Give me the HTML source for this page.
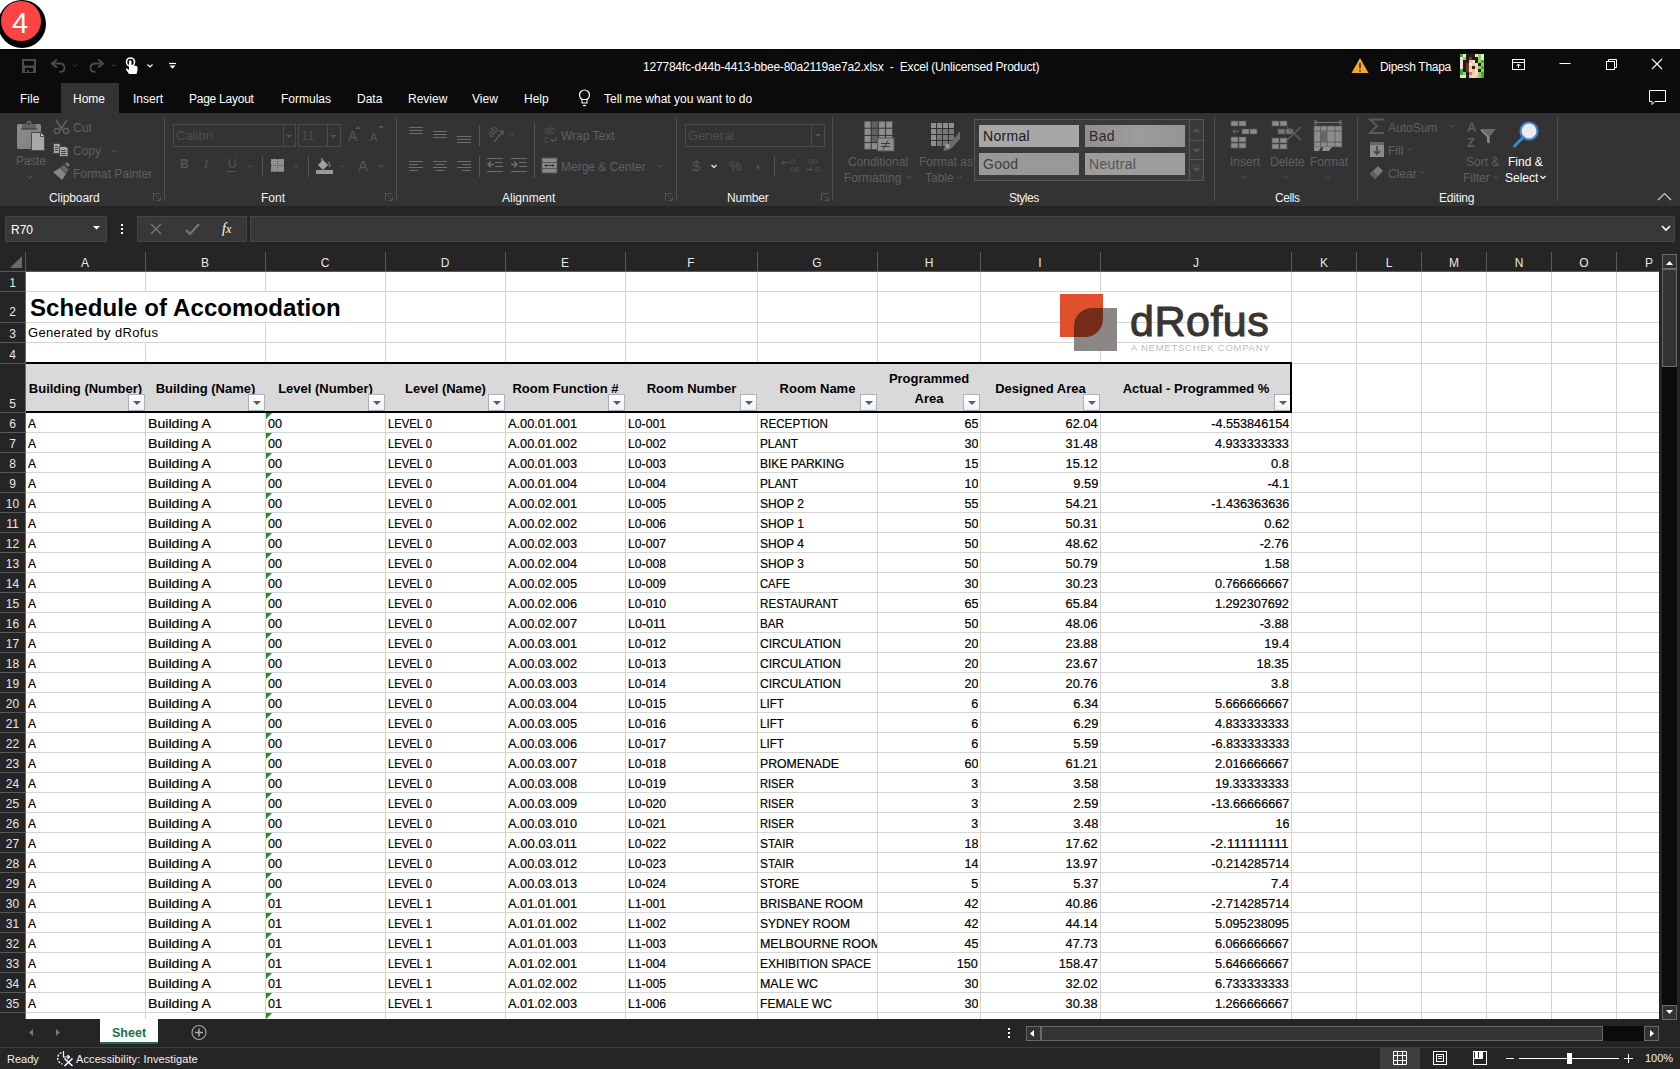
<!DOCTYPE html><html><head><meta charset="utf-8"><style>
*{box-sizing:border-box;margin:0;padding:0}
html,body{width:1680px;height:1069px;overflow:hidden;background:#fff;font-family:"Liberation Sans",sans-serif}
.a{position:absolute}
.t{position:absolute;white-space:pre;line-height:1}
.dis{color:#6f6f6f}
.lbl{position:absolute;white-space:pre;color:#f2f2f2;font-size:12px;line-height:1}
.sep{position:absolute;width:1px;background:#4f4f4f}
.cell{position:absolute;white-space:pre;font-size:13px;line-height:20px;color:#000;height:20px;overflow:hidden;-webkit-text-stroke:0.2px #000}
.r{text-align:right}
.fb{position:absolute;width:17px;height:17px;border:1px solid #a9b1ba;background:linear-gradient(#ffffff,#eef1f5)}
.fb:after{content:"";position:absolute;left:4px;top:6px;border-left:4px solid transparent;border-right:4px solid transparent;border-top:4px solid #5d5d5d}
.gt{position:absolute;width:0;height:0;border-top:6px solid #1e8c1e;border-right:6px solid transparent}

</style></head><body>
<div class="a" style="left:-2px;top:0;width:48px;height:48px;border-radius:50%;background:#000"></div>
<div class="a" style="left:1px;top:1px;width:40px;height:40px;border-radius:50%;background:#fd4444"></div>
<div class="t" style="left:12px;top:9px;font-size:29px;color:#fff;">4</div>
<div class="a" style="left:0;top:49px;width:1680px;height:64px;background:#0b0b0b"></div>
<div class="a" style="left:61px;top:83px;width:58px;height:30px;background:#333"></div>
<div class="t" style="left:20px;top:93px;font-size:12px;color:#fff;">File</div>
<div class="t" style="left:73px;top:93px;font-size:12px;color:#fff;">Home</div>
<div class="t" style="left:133px;top:93px;font-size:12px;color:#fff;">Insert</div>
<div class="t" style="left:189px;top:93px;font-size:12px;color:#fff;letter-spacing:-0.25px">Page Layout</div>
<div class="t" style="left:281px;top:93px;font-size:12px;color:#fff;">Formulas</div>
<div class="t" style="left:357px;top:93px;font-size:12px;color:#fff;">Data</div>
<div class="t" style="left:408px;top:93px;font-size:12px;color:#fff;">Review</div>
<div class="t" style="left:472px;top:93px;font-size:12px;color:#fff;">View</div>
<div class="t" style="left:524px;top:93px;font-size:12px;color:#fff;">Help</div>
<div class="t" style="left:604px;top:93px;font-size:12px;color:#fff">Tell me what you want to do</div>
<div class="t" style="left:643px;top:61px;font-size:12px;color:#fff;letter-spacing:-0.2px">127784fc-d44b-4413-bbee-80a2119ae7a2.xlsx  -  Excel (Unlicensed Product)</div>
<div class="t" style="left:1380px;top:61px;font-size:12px;color:#fff;letter-spacing:-0.3px">Dipesh Thapa</div>
<div class="a" style="left:0;top:113px;width:1680px;height:93px;background:#333"></div>
<div class="sep" style="left:164px;top:117px;height:84px"></div>
<div class="sep" style="left:396px;top:117px;height:84px"></div>
<div class="sep" style="left:676px;top:117px;height:84px"></div>
<div class="sep" style="left:832px;top:117px;height:84px"></div>
<div class="sep" style="left:1214px;top:117px;height:84px"></div>
<div class="sep" style="left:1357px;top:117px;height:84px"></div>
<div class="sep" style="left:1557px;top:117px;height:84px"></div>
<div class="lbl" style="left:49px;top:192px;letter-spacing:-0.1px">Clipboard</div>
<div class="lbl" style="left:261px;top:192px;letter-spacing:0px">Font</div>
<div class="lbl" style="left:502px;top:192px;letter-spacing:0px">Alignment</div>
<div class="lbl" style="left:727px;top:192px;letter-spacing:-0.2px">Number</div>
<div class="lbl" style="left:1009px;top:192px;letter-spacing:-0.5px">Styles</div>
<div class="lbl" style="left:1275px;top:192px;letter-spacing:-0.4px">Cells</div>
<div class="lbl" style="left:1439px;top:192px;letter-spacing:-0.2px">Editing</div>
<svg class="a" style="left:0;top:0" width="1680" height="210" viewBox="0 0 1680 210"><defs><linearGradient id="pg" x1="0" y1="0" x2="1" y2="1"><stop offset="0" stop-color="#8e8e8e"/><stop offset="1" stop-color="#7c7c7c"/></linearGradient></defs><rect x="17" y="124" width="24" height="25" rx="1.5" fill="url(#pg)"/><rect x="22" y="124" width="14" height="5" fill="#646464"/><circle cx="29" cy="123" r="2.5" fill="#646464"/><circle cx="29" cy="124" r="1" fill="#333"/><rect x="21" y="128" width="16" height="2" fill="#2f2f2f" opacity=".5"/><path d="M31.5 132.5 H40.5 L44.5 136.5 V150.5 H31.5 Z" fill="#a8a8a8" stroke="#4a4a4a" stroke-width="1"/><path d="M40.5 132.5 V136.5 H44.5" fill="#d0d0d0" stroke="#4a4a4a" stroke-width="1"/><path d="M27 176 L29.5 178.5 L32 176" fill="none" stroke="#606060" stroke-width="1"/><path d="M56 120 L62.5 130 M67 120 L60.5 130" stroke="#606060" stroke-width="1.6" fill="none"/><circle cx="57" cy="131" r="2.6" fill="none" stroke="#606060" stroke-width="1.3"/><circle cx="66" cy="131" r="2.6" fill="none" stroke="#606060" stroke-width="1.3"/><path d="M53.5 143.5 H59 L60.5 145 V153.5 H53.5 Z" fill="#a6a6a6" stroke="#444" stroke-width="1"/><path d="M59.5 146.5 H66 L68 148.5 V156.5 H59.5 Z" fill="#a6a6a6" stroke="#444" stroke-width="1"/><path d="M55 146.5h3M55 148.5h3M55 150.5h3M61 150.5h5M61 152.5h5M61 154.5h5" stroke="#444" stroke-width="1"/><path d="M112 150 L114.5 152.5 L117 150" fill="none" stroke="#606060" stroke-width="1"/><path d="M53 172 L60 168 L66 174 L62 180 Z" fill="#858585"/><path d="M60 167.5 L64 165 L68.5 169.5 L66 173.5 Z" fill="#666"/><path d="M65 164 L67 162 L70 165 L68 167 Z" fill="#777"/><path d="M153.5 200.5 V193.5 H160.5" fill="none" stroke="#555" stroke-width="1"/><path d="M155.5 195.5 L160.5 200.5 M157 200.5 H160.5 V197" fill="none" stroke="#555" stroke-width="1"/><path d="M385.5 200.5 V193.5 H392.5" fill="none" stroke="#555" stroke-width="1"/><path d="M387.5 195.5 L392.5 200.5 M389 200.5 H392.5 V197" fill="none" stroke="#555" stroke-width="1"/><path d="M665.5 200.5 V193.5 H672.5" fill="none" stroke="#555" stroke-width="1"/><path d="M667.5 195.5 L672.5 200.5 M669 200.5 H672.5 V197" fill="none" stroke="#555" stroke-width="1"/><path d="M821.5 200.5 V193.5 H828.5" fill="none" stroke="#555" stroke-width="1"/><path d="M823.5 195.5 L828.5 200.5 M825 200.5 H828.5 V197" fill="none" stroke="#555" stroke-width="1"/><rect x="173.5" y="124.5" width="122" height="22" fill="none" stroke="#4a4a4a"/><path d="M283.5 125 V146" stroke="#4a4a4a"/><path d="M286 135 L289 138 L292 135 Z" fill="#555"/><rect x="298.5" y="124.5" width="42" height="22" fill="none" stroke="#4a4a4a"/><path d="M327.5 125 V146" stroke="#4a4a4a"/><path d="M330.5 135 L333.5 138 L336.5 135 Z" fill="#555"/><path d="M355 129 L358 126 L361 129 Z" fill="#555"/><path d="M378 126 L381 129 L384 126 Z" fill="#555"/><path d="M227 171.5 H236" stroke="#555"/><path d="M247.5 165 L250 167.5 L252.5 165" fill="none" stroke="#555" stroke-width="1"/><path d="M293.5 165 L296 167.5 L298.5 165" fill="none" stroke="#555" stroke-width="1"/><path d="M339.5 165 L342 167.5 L344.5 165" fill="none" stroke="#555" stroke-width="1"/><path d="M378.5 165 L381 167.5 L383.5 165" fill="none" stroke="#555" stroke-width="1"/><path d="M262.5 156 V177 M308.5 156 V177" stroke="#555"/><rect x="271" y="159" width="13" height="12" fill="#8f8f8f"/><path d="M271 165.5 H284 M277.5 159 V171" stroke="#555" stroke-dasharray="1 1"/><path d="M271 171 H284" stroke="#8f8f8f" stroke-width="1.5"/><path d="M318 165 L323 160 L328 165 L323 170 Z" fill="#a0a0a0"/><path d="M322 158 V163" stroke="#a0a0a0" stroke-width="1.2"/><path d="M328 162 Q331 164 329 167" stroke="#777" stroke-width="1.5" fill="none"/><rect x="316" y="170" width="17" height="4" fill="#9a9a9a"/><path d="M409 127.5 H423" stroke="#6e6e6e"/><path d="M409 130.5 H423" stroke="#6e6e6e"/><path d="M409 133.5 H423" stroke="#6e6e6e"/><path d="M433 131.5 H447" stroke="#6e6e6e"/><path d="M433 134.5 H447" stroke="#6e6e6e"/><path d="M433 137.5 H447" stroke="#6e6e6e"/><path d="M457 136.5 H471" stroke="#6e6e6e"/><path d="M457 139.5 H471" stroke="#6e6e6e"/><path d="M457 142.5 H471" stroke="#6e6e6e"/><path d="M409 161.5 H423" stroke="#6e6e6e"/><path d="M409 164.5 H418" stroke="#6e6e6e"/><path d="M409 167.5 H423" stroke="#6e6e6e"/><path d="M409 170.5 H418" stroke="#6e6e6e"/><path d="M433.0 161.5 H447.0" stroke="#6e6e6e"/><path d="M435.5 164.5 H444.5" stroke="#6e6e6e"/><path d="M433.0 167.5 H447.0" stroke="#6e6e6e"/><path d="M435.5 170.5 H444.5" stroke="#6e6e6e"/><path d="M457 161.5 H471" stroke="#6e6e6e"/><path d="M462 164.5 H471" stroke="#6e6e6e"/><path d="M457 167.5 H471" stroke="#6e6e6e"/><path d="M462 170.5 H471" stroke="#6e6e6e"/><path d="M479.5 125 V146 M479.5 156 V177 M534.5 123 V178" stroke="#555"/><path d="M494 142 L503 131 M499 131 H503 V135" stroke="#5a5a5a" stroke-width="1.2" fill="none"/><path d="M509 133 L511.5 135.5 L514 133" fill="none" stroke="#555"/><path d="M487 158.5 H503 M495 162.5 H503 M495 166.5 H503 M487 171.5 H503" stroke="#6e6e6e"/><path d="M494 164.5 H488 M491 161.5 L488 164.5 L491 167.5" stroke="#6e6e6e" stroke-width="1.4" fill="none"/><path d="M511 158.5 H527 M519 162.5 H527 M519 166.5 H527 M511 171.5 H527" stroke="#6e6e6e"/><path d="M511 164.5 H517 M514 161.5 L517 164.5 L514 167.5" stroke="#6e6e6e" stroke-width="1.4" fill="none"/><path d="M556 137 V140.5 H551 M553 138.5 L551 140.5 L553 142.5" stroke="#5a5a5a" fill="none"/><rect x="542" y="158" width="15" height="15" fill="#8a8a8a" stroke="#555" stroke-width="1"/><path d="M542 162.5 H557 M542 168.5 H557" stroke="#555"/><path d="M545 165.5 H554 M546.5 164 L545 165.5 L546.5 167 M552.5 164 L554 165.5 L552.5 167" stroke="#333" fill="none"/><path d="M657.5 165 L660 167.5 L662.5 165" fill="none" stroke="#555"/><rect x="685.5" y="124.5" width="139" height="22" fill="none" stroke="#4a4a4a"/><path d="M811.5 125 V146" stroke="#4a4a4a"/><path d="M815 134 L818 137 L821 134 Z" fill="#555"/><path d="M711.5 165 L714 167.5 L716.5 165" fill="none" stroke="#ddd" stroke-width="1.5"/><path d="M774.5 156 V177" stroke="#555"/><path d="M788 162.5 H782 M784 160.5 L782 162.5 L784 164.5" stroke="#555" fill="none"/><path d="M806 169.5 H812 M810 167.5 L812 169.5 L810 171.5" stroke="#555" fill="none"/><rect x="864.5" y="121.5" width="6.2" height="6.2" fill="#8e8e8e"/><rect x="871.7" y="121.5" width="6.2" height="6.2" fill="#626262"/><rect x="878.9" y="121.5" width="6.2" height="6.2" fill="#8e8e8e"/><rect x="886.1" y="121.5" width="6.2" height="6.2" fill="#8e8e8e"/><rect x="864.5" y="128.7" width="6.2" height="6.2" fill="#8e8e8e"/><rect x="871.7" y="128.7" width="6.2" height="6.2" fill="#626262"/><rect x="878.9" y="128.7" width="6.2" height="6.2" fill="#8e8e8e"/><rect x="886.1" y="128.7" width="6.2" height="6.2" fill="#8e8e8e"/><rect x="864.5" y="135.9" width="6.2" height="6.2" fill="#8e8e8e"/><rect x="871.7" y="135.9" width="6.2" height="6.2" fill="#626262"/><rect x="878.9" y="135.9" width="6.2" height="6.2" fill="#8e8e8e"/><rect x="886.1" y="135.9" width="6.2" height="6.2" fill="#8e8e8e"/><rect x="864.5" y="143.1" width="6.2" height="6.2" fill="#8e8e8e"/><rect x="871.7" y="143.1" width="6.2" height="6.2" fill="#8e8e8e"/><rect x="878.9" y="143.1" width="6.2" height="6.2" fill="#8e8e8e"/><rect x="886.1" y="143.1" width="6.2" height="6.2" fill="#8e8e8e"/><rect x="865" y="138" width="0" height="0"/><rect x="877.5" y="138" width="16.5" height="13" fill="#8e8e8e" stroke="#555" stroke-width="1"/><path d="M881 143.5 H890 M881 146.5 H890 M888 140.5 L883 149.5" stroke="#3a3a3a" stroke-width="1"/><path d="M906.5 176 L909 178.5 L911.5 176" fill="none" stroke="#555"/><rect x="931" y="123" width="5" height="5" fill="#8e8e8e"/><rect x="937" y="123" width="5" height="5" fill="#8e8e8e"/><rect x="943" y="123" width="5" height="5" fill="#8e8e8e"/><rect x="949" y="123" width="5" height="5" fill="#8e8e8e"/><rect x="931" y="129" width="5" height="5" fill="#8e8e8e"/><rect x="937" y="129" width="5" height="5" fill="#777"/><rect x="943" y="129" width="5" height="5" fill="#777"/><rect x="949" y="129" width="5" height="5" fill="#777"/><rect x="931" y="135" width="5" height="5" fill="#8e8e8e"/><rect x="937" y="135" width="5" height="5" fill="#777"/><rect x="943" y="135" width="5" height="5" fill="#777"/><rect x="949" y="135" width="5" height="5" fill="#777"/><rect x="931" y="141" width="5" height="5" fill="#8e8e8e"/><rect x="937" y="141" width="5" height="5" fill="#777"/><rect x="943" y="141" width="5" height="5" fill="#777"/><rect x="949" y="141" width="5" height="5" fill="#777"/><path d="M943 151 Q945 144 950 144 L960 131 V139 L952 148 Q948 151 943 151 Z" fill="#6a6a6a"/><circle cx="947.5" cy="146" r="2.3" fill="#9a9a9a"/><path d="M956.5 176 L959 178.5 L961.5 176" fill="none" stroke="#555"/><rect x="974.5" y="119.5" width="229" height="61" fill="#3a3a3a" stroke="#575757"/><path d="M1189.5 120 V180 M1190 140.5 H1203 M1190 159.5 H1203" stroke="#575757"/><defs><linearGradient id="gb" x1="0" x2="1"><stop offset="0" stop-color="#8f8f8f"/><stop offset=".5" stop-color="#9c9c9c"/><stop offset="1" stop-color="#959595"/></linearGradient></defs><rect x="979" y="125" width="100" height="22" fill="#a7a7a7"/><rect x="1085" y="125" width="100" height="22" fill="url(#gb)"/><rect x="979" y="153" width="100" height="22" fill="#999"/><rect x="1085" y="153" width="100" height="22" fill="#9d9d9d"/><path d="M1193 132 L1196.5 128.5 L1200 132 Z M1193 149 L1196.5 152.5 L1200 149 Z M1193 168 L1196.5 171.5 L1200 168 Z M1193 165.5 H1200" fill="#555" stroke="#555" stroke-width=".6"/><rect x="1231" y="121" width="7" height="5" fill="#8c8c8c" stroke="#555" stroke-width=".7"/><rect x="1239" y="121" width="7" height="5" fill="#8c8c8c" stroke="#555" stroke-width=".7"/><rect x="1242" y="129" width="7" height="5" fill="#8c8c8c" stroke="#555" stroke-width=".7"/><rect x="1250" y="129" width="7" height="5" fill="#8c8c8c" stroke="#555" stroke-width=".7"/><path d="M1239 131.5 H1233 M1235 129.5 L1233 131.5 L1235 133.5" stroke="#5e5e5e" stroke-width="1.3" fill="none"/><rect x="1231" y="137" width="7" height="5" fill="#8c8c8c" stroke="#555" stroke-width=".7"/><rect x="1239" y="137" width="7" height="5" fill="#8c8c8c" stroke="#555" stroke-width=".7"/><rect x="1231" y="143" width="7" height="5" fill="#8c8c8c" stroke="#555" stroke-width=".7"/><rect x="1239" y="143" width="7" height="5" fill="#8c8c8c" stroke="#555" stroke-width=".7"/><rect x="1272" y="121" width="7" height="5" fill="#8c8c8c" stroke="#555" stroke-width=".7"/><rect x="1280" y="121" width="7" height="5" fill="#8c8c8c" stroke="#555" stroke-width=".7"/><rect x="1278" y="129" width="7" height="5" fill="#777" stroke="#555" stroke-width=".7"/><rect x="1286" y="129" width="7" height="5" fill="#777" stroke="#555" stroke-width=".7"/><rect x="1272" y="138" width="7" height="5" fill="#8c8c8c" stroke="#555" stroke-width=".7"/><rect x="1280" y="138" width="7" height="5" fill="#8c8c8c" stroke="#555" stroke-width=".7"/><rect x="1272" y="144" width="7" height="5" fill="#8c8c8c" stroke="#555" stroke-width=".7"/><rect x="1280" y="144" width="7" height="5" fill="#8c8c8c" stroke="#555" stroke-width=".7"/><path d="M1287 127 L1301 140 M1287 140 L1301 127" stroke="#5e5e5e" stroke-width="1.6"/><path d="M1315 122.5 H1341 M1315 120 V125 M1341 120 V125 M1317 120.5 L1315 122.5 L1317 124.5 M1339 120.5 L1341 122.5 L1339 124.5" stroke="#777" fill="none"/><rect x="1314" y="126" width="28" height="21" fill="#8c8c8c" stroke="#555" stroke-width=".7"/><path d="M1314 131 H1342 M1314 142 H1342 M1320.5 126 V147 M1327 126 V147 M1335 126 V147" stroke="#555" stroke-width=".8"/><rect x="1321" y="131.5" width="6" height="10.5" fill="#666"/><path d="M1314 147 H1321 L1319 151 H1314 Z M1323 147 H1332 L1329 151 H1322 Z" fill="#8c8c8c"/><path d="M1241.5 176 L1244 178.5 L1246.5 176" fill="none" stroke="#555"/><path d="M1283.5 176 L1286 178.5 L1288.5 176" fill="none" stroke="#555"/><path d="M1325.5 176 L1328 178.5 L1330.5 176" fill="none" stroke="#555"/><path d="M1384 119.5 H1370 L1377 126 L1370 133 H1384" fill="none" stroke="#5a5a5a" stroke-width="1.8"/><path d="M1449.5 125 L1452 127.5 L1454.5 125" fill="none" stroke="#555"/><rect x="1370" y="142" width="14" height="15" fill="#8c8c8c"/><rect x="1370" y="142" width="14" height="3" fill="#666"/><path d="M1377 146 V154 M1374 151 L1377 154 L1380 151" stroke="#444" stroke-width="1.6" fill="none"/><path d="M1407.5 148 L1410 150.5 L1412.5 148" fill="none" stroke="#555"/><path d="M1378 166 L1383 171 L1375 179 L1370 174 Z" fill="#7a7a7a"/><path d="M1370 174 L1373 171 L1378 176 L1375 179 Z" fill="#5e5e5e"/><path d="M1419.5 171 L1422 173.5 L1424.5 171" fill="none" stroke="#555"/><path d="M1480 129 H1496 L1490 136 V144 L1487 142 V136 Z" fill="#6a6a6a"/><path d="M1481 130 L1488 137 V143" stroke="#9a9a9a" stroke-width="1.2" fill="none"/><path d="M1493.5 176 L1496 178.5 L1498.5 176" fill="none" stroke="#555"/><circle cx="1529" cy="131" r="8.5" fill="#ececec" stroke="#3a86d8" stroke-width="2.2"/><path d="M1523 137.5 L1514.5 146" stroke="#3a86d8" stroke-width="3" stroke-linecap="round"/><path d="M1540.5 176 L1543 178.5 L1545.5 176" fill="none" stroke="#fff" stroke-width="1.2"/><path d="M1658 200 L1664.5 193.5 L1671 200" fill="none" stroke="#ccc" stroke-width="1.2"/></svg>
<div class="t" style="left:16px;top:155px;font-size:12px;color:#606060;letter-spacing:-0.2px">Paste</div>
<div class="t" style="left:73px;top:122px;font-size:12px;color:#606060;">Cut</div>
<div class="t" style="left:73px;top:145px;font-size:12px;color:#606060;">Copy</div>
<div class="t" style="left:73px;top:168px;font-size:12px;color:#606060;">Format Painter</div>
<div class="t" style="left:28px;top:204px;font-size:12px;color:#606060;"></div>
<div class="t" style="left:176px;top:129px;font-size:13px;color:#4e4e4e;">Calibri</div>
<div class="t" style="left:301px;top:129px;font-size:13px;color:#4e4e4e;">11</div>
<div class="t" style="left:348px;top:129px;font-size:14px;color:#555;">A</div>
<div class="t" style="left:370px;top:132px;font-size:11px;color:#555;">A</div>
<div class="t" style="left:180px;top:158px;font-size:12px;color:#555;font-weight:bold">B</div>
<div class="t" style="left:204px;top:158px;font-size:12px;color:#555;font-style:italic;font-family:Liberation Serif">I</div>
<div class="t" style="left:228px;top:158px;font-size:12px;color:#555;">U</div>
<div class="t" style="left:358px;top:158px;font-size:15px;color:#555;">A</div>
<div class="t" style="left:488px;top:126px;font-size:10px;color:#5a5a5a;transform:rotate(-45deg);transform-origin:6px 6px">ab</div>
<div class="t" style="left:544px;top:126px;font-size:10px;color:#505050;">ab</div>
<div class="t" style="left:544px;top:135px;font-size:10px;color:#505050;">c</div>
<div class="t" style="left:561px;top:130px;font-size:12px;color:#606060;">Wrap Text</div>
<div class="t" style="left:561px;top:161px;font-size:12px;color:#606060;">Merge &amp; Center</div>
<div class="t" style="left:688px;top:129px;font-size:13px;color:#4e4e4e;">General</div>
<div class="t" style="left:692px;top:158px;font-size:15px;color:#555;">$</div>
<div class="t" style="left:729px;top:159px;font-size:14px;color:#555;">%</div>
<div class="t" style="left:756px;top:155px;font-size:15px;color:#555;font-weight:bold">,</div>
<div class="t" style="left:788px;top:158px;font-size:8px;color:#555;">.0</div>
<div class="t" style="left:788px;top:166px;font-size:8px;color:#555;">.00</div>
<div class="t" style="left:806px;top:158px;font-size:8px;color:#555;">.00</div>
<div class="t" style="left:813px;top:166px;font-size:8px;color:#555;">.0</div>
<div class="t" style="left:848px;top:156px;font-size:12px;color:#606060;">Conditional</div>
<div class="t" style="left:844px;top:172px;font-size:12px;color:#606060;">Formatting</div>
<div class="t" style="left:919px;top:156px;font-size:12px;color:#606060;">Format as</div>
<div class="t" style="left:925px;top:172px;font-size:12px;color:#606060;">Table</div>
<div class="t" style="left:983px;top:129px;font-size:14px;color:#1a1a1a;letter-spacing:0.3px">Normal</div>
<div class="t" style="left:1089px;top:129px;font-size:14px;color:#2b2b2b;letter-spacing:0.3px">Bad</div>
<div class="t" style="left:983px;top:157px;font-size:14px;color:#404040;letter-spacing:0.3px">Good</div>
<div class="t" style="left:1089px;top:157px;font-size:14px;color:#555;letter-spacing:0.3px">Neutral</div>
<div class="t" style="left:1230px;top:156px;font-size:12px;color:#606060;">Insert</div>
<div class="t" style="left:1270px;top:156px;font-size:12px;color:#606060;">Delete</div>
<div class="t" style="left:1310px;top:156px;font-size:12px;color:#606060;">Format</div>
<div class="t" style="left:1388px;top:122px;font-size:12px;color:#606060;">AutoSum</div>
<div class="t" style="left:1388px;top:145px;font-size:12px;color:#606060;">Fill</div>
<div class="t" style="left:1388px;top:168px;font-size:12px;color:#606060;">Clear</div>
<div class="t" style="left:1467px;top:121px;font-size:13px;color:#5e5e5e;font-weight:bold">A</div>
<div class="t" style="left:1467px;top:136px;font-size:13px;color:#5e5e5e;font-weight:bold">Z</div>
<div class="t" style="left:1466px;top:156px;font-size:12px;color:#606060;">Sort &amp;</div>
<div class="t" style="left:1463px;top:172px;font-size:12px;color:#606060;">Filter</div>
<div class="t" style="left:1508px;top:156px;font-size:12px;color:#fff;">Find &amp;</div>
<div class="t" style="left:1505px;top:172px;font-size:12px;color:#fff;">Select</div>
<div class="a" style="left:0;top:206px;width:1680px;height:863px;background:#252525"></div>
<div class="a" style="left:5px;top:216px;width:102px;height:26px;background:#383838;border:1px solid #454545"></div>
<div class="t" style="left:11px;top:224px;font-size:12px;color:#fff">R70</div>
<div class="a" style="left:137px;top:216px;width:110px;height:26px;background:#383838;border:1px solid #454545"></div>
<div class="a" style="left:250px;top:216px;width:1425px;height:26px;background:#383838;border:1px solid #454545"></div>
<div class="a" style="left:26px;top:272px;width:1633px;height:747px;background:#fff;overflow:hidden">
<div class="a" style="left:0px;top:19px;width:1633px;height:1px;background:#d4d4d4"></div>
<div class="a" style="left:0px;top:50px;width:1633px;height:1px;background:#d4d4d4"></div>
<div class="a" style="left:0px;top:70px;width:1633px;height:1px;background:#d4d4d4"></div>
<div class="a" style="left:0px;top:140px;width:1633px;height:1px;background:#d4d4d4"></div>
<div class="a" style="left:0px;top:160px;width:1633px;height:1px;background:#d4d4d4"></div>
<div class="a" style="left:0px;top:180px;width:1633px;height:1px;background:#d4d4d4"></div>
<div class="a" style="left:0px;top:200px;width:1633px;height:1px;background:#d4d4d4"></div>
<div class="a" style="left:0px;top:220px;width:1633px;height:1px;background:#d4d4d4"></div>
<div class="a" style="left:0px;top:240px;width:1633px;height:1px;background:#d4d4d4"></div>
<div class="a" style="left:0px;top:260px;width:1633px;height:1px;background:#d4d4d4"></div>
<div class="a" style="left:0px;top:280px;width:1633px;height:1px;background:#d4d4d4"></div>
<div class="a" style="left:0px;top:300px;width:1633px;height:1px;background:#d4d4d4"></div>
<div class="a" style="left:0px;top:320px;width:1633px;height:1px;background:#d4d4d4"></div>
<div class="a" style="left:0px;top:340px;width:1633px;height:1px;background:#d4d4d4"></div>
<div class="a" style="left:0px;top:360px;width:1633px;height:1px;background:#d4d4d4"></div>
<div class="a" style="left:0px;top:380px;width:1633px;height:1px;background:#d4d4d4"></div>
<div class="a" style="left:0px;top:400px;width:1633px;height:1px;background:#d4d4d4"></div>
<div class="a" style="left:0px;top:420px;width:1633px;height:1px;background:#d4d4d4"></div>
<div class="a" style="left:0px;top:440px;width:1633px;height:1px;background:#d4d4d4"></div>
<div class="a" style="left:0px;top:460px;width:1633px;height:1px;background:#d4d4d4"></div>
<div class="a" style="left:0px;top:480px;width:1633px;height:1px;background:#d4d4d4"></div>
<div class="a" style="left:0px;top:500px;width:1633px;height:1px;background:#d4d4d4"></div>
<div class="a" style="left:0px;top:520px;width:1633px;height:1px;background:#d4d4d4"></div>
<div class="a" style="left:0px;top:540px;width:1633px;height:1px;background:#d4d4d4"></div>
<div class="a" style="left:0px;top:560px;width:1633px;height:1px;background:#d4d4d4"></div>
<div class="a" style="left:0px;top:580px;width:1633px;height:1px;background:#d4d4d4"></div>
<div class="a" style="left:0px;top:600px;width:1633px;height:1px;background:#d4d4d4"></div>
<div class="a" style="left:0px;top:620px;width:1633px;height:1px;background:#d4d4d4"></div>
<div class="a" style="left:0px;top:640px;width:1633px;height:1px;background:#d4d4d4"></div>
<div class="a" style="left:0px;top:660px;width:1633px;height:1px;background:#d4d4d4"></div>
<div class="a" style="left:0px;top:680px;width:1633px;height:1px;background:#d4d4d4"></div>
<div class="a" style="left:0px;top:700px;width:1633px;height:1px;background:#d4d4d4"></div>
<div class="a" style="left:0px;top:720px;width:1633px;height:1px;background:#d4d4d4"></div>
<div class="a" style="left:0px;top:740px;width:1633px;height:1px;background:#d4d4d4"></div>
<div class="a" style="left:0px;top:91px;width:1633px;height:1px;background:#d4d4d4"></div>
<div class="a" style="left:119px;top:0px;width:1px;height:20px;background:#d4d4d4"></div>
<div class="a" style="left:119px;top:70px;width:1px;height:20px;background:#d4d4d4"></div>
<div class="a" style="left:119px;top:141px;width:1px;height:607px;background:#d4d4d4"></div>
<div class="a" style="left:239px;top:0px;width:1px;height:20px;background:#d4d4d4"></div>
<div class="a" style="left:239px;top:51px;width:1px;height:39px;background:#d4d4d4"></div>
<div class="a" style="left:239px;top:141px;width:1px;height:607px;background:#d4d4d4"></div>
<div class="a" style="left:359px;top:0px;width:1px;height:90px;background:#d4d4d4"></div>
<div class="a" style="left:359px;top:141px;width:1px;height:607px;background:#d4d4d4"></div>
<div class="a" style="left:479px;top:0px;width:1px;height:90px;background:#d4d4d4"></div>
<div class="a" style="left:479px;top:141px;width:1px;height:607px;background:#d4d4d4"></div>
<div class="a" style="left:599px;top:0px;width:1px;height:90px;background:#d4d4d4"></div>
<div class="a" style="left:599px;top:141px;width:1px;height:607px;background:#d4d4d4"></div>
<div class="a" style="left:731px;top:0px;width:1px;height:90px;background:#d4d4d4"></div>
<div class="a" style="left:731px;top:141px;width:1px;height:607px;background:#d4d4d4"></div>
<div class="a" style="left:851px;top:0px;width:1px;height:90px;background:#d4d4d4"></div>
<div class="a" style="left:851px;top:141px;width:1px;height:607px;background:#d4d4d4"></div>
<div class="a" style="left:954px;top:0px;width:1px;height:90px;background:#d4d4d4"></div>
<div class="a" style="left:954px;top:141px;width:1px;height:607px;background:#d4d4d4"></div>
<div class="a" style="left:1074px;top:0px;width:1px;height:90px;background:#d4d4d4"></div>
<div class="a" style="left:1074px;top:141px;width:1px;height:607px;background:#d4d4d4"></div>
<div class="a" style="left:1265px;top:0px;width:1px;height:90px;background:#d4d4d4"></div>
<div class="a" style="left:1265px;top:141px;width:1px;height:607px;background:#d4d4d4"></div>
<div class="a" style="left:1330px;top:0px;width:1px;height:90px;background:#d4d4d4"></div>
<div class="a" style="left:1330px;top:90px;width:1px;height:51px;background:#d4d4d4"></div>
<div class="a" style="left:1330px;top:141px;width:1px;height:607px;background:#d4d4d4"></div>
<div class="a" style="left:1395px;top:0px;width:1px;height:90px;background:#d4d4d4"></div>
<div class="a" style="left:1395px;top:90px;width:1px;height:51px;background:#d4d4d4"></div>
<div class="a" style="left:1395px;top:141px;width:1px;height:607px;background:#d4d4d4"></div>
<div class="a" style="left:1460px;top:0px;width:1px;height:90px;background:#d4d4d4"></div>
<div class="a" style="left:1460px;top:90px;width:1px;height:51px;background:#d4d4d4"></div>
<div class="a" style="left:1460px;top:141px;width:1px;height:607px;background:#d4d4d4"></div>
<div class="a" style="left:1525px;top:0px;width:1px;height:90px;background:#d4d4d4"></div>
<div class="a" style="left:1525px;top:90px;width:1px;height:51px;background:#d4d4d4"></div>
<div class="a" style="left:1525px;top:141px;width:1px;height:607px;background:#d4d4d4"></div>
<div class="a" style="left:1590px;top:0px;width:1px;height:90px;background:#d4d4d4"></div>
<div class="a" style="left:1590px;top:90px;width:1px;height:51px;background:#d4d4d4"></div>
<div class="a" style="left:1590px;top:141px;width:1px;height:607px;background:#d4d4d4"></div>
<div class="a" style="left:0;top:92px;width:1265px;height:47px;background:#d9d9d9"></div>
<div class="a" style="left:0px;top:90px;width:1266px;height:2px;background:#000"></div>
<div class="a" style="left:0px;top:139px;width:1266px;height:2px;background:#000"></div>
<div class="a" style="left:1264px;top:90px;width:2px;height:51px;background:#000"></div>
<div class="t" style="left:4px;top:24px;font-size:24px;font-weight:bold;color:#000;letter-spacing:0.1px">Schedule of Accomodation</div>
<div class="t" style="left:2px;top:54px;font-size:13px;color:#000;letter-spacing:0.35px">Generated by dRofus</div>
<div class="t" style="left:0px;width:119px;text-align:center;top:110px;font-size:13px;font-weight:bold">Building (Number)</div>
<div class="fb" style="left:102px;top:122px"></div>
<div class="t" style="left:120px;width:119px;text-align:center;top:110px;font-size:13px;font-weight:bold">Building (Name)</div>
<div class="fb" style="left:222px;top:122px"></div>
<div class="t" style="left:240px;width:119px;text-align:center;top:110px;font-size:13px;font-weight:bold">Level (Number)</div>
<div class="fb" style="left:342px;top:122px"></div>
<div class="t" style="left:360px;width:119px;text-align:center;top:110px;font-size:13px;font-weight:bold">Level (Name)</div>
<div class="fb" style="left:462px;top:122px"></div>
<div class="t" style="left:480px;width:119px;text-align:center;top:110px;font-size:13px;font-weight:bold">Room Function #</div>
<div class="fb" style="left:582px;top:122px"></div>
<div class="t" style="left:600px;width:131px;text-align:center;top:110px;font-size:13px;font-weight:bold">Room Number</div>
<div class="fb" style="left:714px;top:122px"></div>
<div class="t" style="left:732px;width:119px;text-align:center;top:110px;font-size:13px;font-weight:bold">Room Name</div>
<div class="fb" style="left:834px;top:122px"></div>
<div class="t" style="left:852px;width:102px;text-align:center;top:97px;font-size:13px;font-weight:bold;line-height:20px">Programmed<br>Area</div>
<div class="fb" style="left:937px;top:122px"></div>
<div class="t" style="left:955px;width:119px;text-align:center;top:110px;font-size:13px;font-weight:bold">Designed Area</div>
<div class="fb" style="left:1057px;top:122px"></div>
<div class="t" style="left:1075px;width:190px;text-align:center;top:110px;font-size:13px;font-weight:bold">Actual - Programmed %</div>
<div class="fb" style="left:1248px;top:122px"></div>
<div class="a" style="left:1264px;top:90px;width:2px;height:51px;background:#000"></div>
<div class="cell" style="left:2px;top:142px;width:117px"><span style="display:inline-block;transform:scaleX(0.9226);transform-origin:0 50%">A</span></div>
<div class="cell" style="left:122px;top:142px;width:117px"><span style="display:inline-block;transform:scaleX(1.0895);transform-origin:0 50%">Building A</span></div>
<div class="cell" style="left:242px;top:142px;width:117px"><span style="display:inline-block;transform:scaleX(0.9681);transform-origin:0 50%">00</span></div>
<div class="cell" style="left:362px;top:142px;width:117px"><span style="display:inline-block;transform:scaleX(0.8656);transform-origin:0 50%">LEVEL 0</span></div>
<div class="cell" style="left:482px;top:142px;width:117px"><span style="display:inline-block;transform:scaleX(0.984);transform-origin:0 50%">A.00.01.001</span></div>
<div class="cell" style="left:602px;top:142px;width:129px"><span style="display:inline-block;transform:scaleX(0.9387);transform-origin:0 50%">L0-001</span></div>
<div class="cell" style="left:734px;top:142px;width:117px"><span style="display:inline-block;transform:scaleX(0.8966);transform-origin:0 50%">RECEPTION</span></div>
<div class="cell r" style="left:852px;top:142px;width:100px"><span style="display:inline-block;transform:scaleX(0.9681);transform-origin:100% 50%">65</span></div>
<div class="cell r" style="left:955px;top:142px;width:117px"><span style="display:inline-block;transform:scaleX(0.9836);transform-origin:100% 50%">62.04</span></div>
<div class="cell r" style="left:1075px;top:142px;width:188px"><span style="display:inline-block;transform:scaleX(0.972);transform-origin:100% 50%">-4.553846154</span></div>
<div class="gt" style="left:240px;top:141px"></div>
<div class="cell" style="left:2px;top:162px;width:117px"><span style="display:inline-block;transform:scaleX(0.9226);transform-origin:0 50%">A</span></div>
<div class="cell" style="left:122px;top:162px;width:117px"><span style="display:inline-block;transform:scaleX(1.0895);transform-origin:0 50%">Building A</span></div>
<div class="cell" style="left:242px;top:162px;width:117px"><span style="display:inline-block;transform:scaleX(0.9681);transform-origin:0 50%">00</span></div>
<div class="cell" style="left:362px;top:162px;width:117px"><span style="display:inline-block;transform:scaleX(0.8656);transform-origin:0 50%">LEVEL 0</span></div>
<div class="cell" style="left:482px;top:162px;width:117px"><span style="display:inline-block;transform:scaleX(0.984);transform-origin:0 50%">A.00.01.002</span></div>
<div class="cell" style="left:602px;top:162px;width:129px"><span style="display:inline-block;transform:scaleX(0.9387);transform-origin:0 50%">L0-002</span></div>
<div class="cell" style="left:734px;top:162px;width:117px"><span style="display:inline-block;transform:scaleX(0.9069);transform-origin:0 50%">PLANT</span></div>
<div class="cell r" style="left:852px;top:162px;width:100px"><span style="display:inline-block;transform:scaleX(0.9681);transform-origin:100% 50%">30</span></div>
<div class="cell r" style="left:955px;top:162px;width:117px"><span style="display:inline-block;transform:scaleX(0.9836);transform-origin:100% 50%">31.48</span></div>
<div class="cell r" style="left:1075px;top:162px;width:188px"><span style="display:inline-block;transform:scaleX(0.9747);transform-origin:100% 50%">4.933333333</span></div>
<div class="gt" style="left:240px;top:161px"></div>
<div class="cell" style="left:2px;top:182px;width:117px"><span style="display:inline-block;transform:scaleX(0.9226);transform-origin:0 50%">A</span></div>
<div class="cell" style="left:122px;top:182px;width:117px"><span style="display:inline-block;transform:scaleX(1.0895);transform-origin:0 50%">Building A</span></div>
<div class="cell" style="left:242px;top:182px;width:117px"><span style="display:inline-block;transform:scaleX(0.9681);transform-origin:0 50%">00</span></div>
<div class="cell" style="left:362px;top:182px;width:117px"><span style="display:inline-block;transform:scaleX(0.8656);transform-origin:0 50%">LEVEL 0</span></div>
<div class="cell" style="left:482px;top:182px;width:117px"><span style="display:inline-block;transform:scaleX(0.984);transform-origin:0 50%">A.00.01.003</span></div>
<div class="cell" style="left:602px;top:182px;width:129px"><span style="display:inline-block;transform:scaleX(0.9387);transform-origin:0 50%">L0-003</span></div>
<div class="cell" style="left:734px;top:182px;width:117px"><span style="display:inline-block;transform:scaleX(0.9252);transform-origin:0 50%">BIKE PARKING</span></div>
<div class="cell r" style="left:852px;top:182px;width:100px"><span style="display:inline-block;transform:scaleX(0.9681);transform-origin:100% 50%">15</span></div>
<div class="cell r" style="left:955px;top:182px;width:117px"><span style="display:inline-block;transform:scaleX(0.9836);transform-origin:100% 50%">15.12</span></div>
<div class="cell r" style="left:1075px;top:182px;width:188px"><span style="display:inline-block;transform:scaleX(0.9959);transform-origin:100% 50%">0.8</span></div>
<div class="gt" style="left:240px;top:181px"></div>
<div class="cell" style="left:2px;top:202px;width:117px"><span style="display:inline-block;transform:scaleX(0.9226);transform-origin:0 50%">A</span></div>
<div class="cell" style="left:122px;top:202px;width:117px"><span style="display:inline-block;transform:scaleX(1.0895);transform-origin:0 50%">Building A</span></div>
<div class="cell" style="left:242px;top:202px;width:117px"><span style="display:inline-block;transform:scaleX(0.9681);transform-origin:0 50%">00</span></div>
<div class="cell" style="left:362px;top:202px;width:117px"><span style="display:inline-block;transform:scaleX(0.8656);transform-origin:0 50%">LEVEL 0</span></div>
<div class="cell" style="left:482px;top:202px;width:117px"><span style="display:inline-block;transform:scaleX(0.984);transform-origin:0 50%">A.00.01.004</span></div>
<div class="cell" style="left:602px;top:202px;width:129px"><span style="display:inline-block;transform:scaleX(0.9387);transform-origin:0 50%">L0-004</span></div>
<div class="cell" style="left:734px;top:202px;width:117px"><span style="display:inline-block;transform:scaleX(0.9069);transform-origin:0 50%">PLANT</span></div>
<div class="cell r" style="left:852px;top:202px;width:100px"><span style="display:inline-block;transform:scaleX(0.9681);transform-origin:100% 50%">10</span></div>
<div class="cell r" style="left:955px;top:202px;width:117px"><span style="display:inline-block;transform:scaleX(0.988);transform-origin:100% 50%">9.59</span></div>
<div class="cell r" style="left:1075px;top:202px;width:188px"><span style="display:inline-block;transform:scaleX(0.982);transform-origin:100% 50%">-4.1</span></div>
<div class="gt" style="left:240px;top:201px"></div>
<div class="cell" style="left:2px;top:222px;width:117px"><span style="display:inline-block;transform:scaleX(0.9226);transform-origin:0 50%">A</span></div>
<div class="cell" style="left:122px;top:222px;width:117px"><span style="display:inline-block;transform:scaleX(1.0895);transform-origin:0 50%">Building A</span></div>
<div class="cell" style="left:242px;top:222px;width:117px"><span style="display:inline-block;transform:scaleX(0.9681);transform-origin:0 50%">00</span></div>
<div class="cell" style="left:362px;top:222px;width:117px"><span style="display:inline-block;transform:scaleX(0.8656);transform-origin:0 50%">LEVEL 0</span></div>
<div class="cell" style="left:482px;top:222px;width:117px"><span style="display:inline-block;transform:scaleX(0.984);transform-origin:0 50%">A.00.02.001</span></div>
<div class="cell" style="left:602px;top:222px;width:129px"><span style="display:inline-block;transform:scaleX(0.9387);transform-origin:0 50%">L0-005</span></div>
<div class="cell" style="left:734px;top:222px;width:117px"><span style="display:inline-block;transform:scaleX(0.9273);transform-origin:0 50%">SHOP 2</span></div>
<div class="cell r" style="left:852px;top:222px;width:100px"><span style="display:inline-block;transform:scaleX(0.9681);transform-origin:100% 50%">55</span></div>
<div class="cell r" style="left:955px;top:222px;width:117px"><span style="display:inline-block;transform:scaleX(0.9836);transform-origin:100% 50%">54.21</span></div>
<div class="cell r" style="left:1075px;top:222px;width:188px"><span style="display:inline-block;transform:scaleX(0.972);transform-origin:100% 50%">-1.436363636</span></div>
<div class="gt" style="left:240px;top:221px"></div>
<div class="cell" style="left:2px;top:242px;width:117px"><span style="display:inline-block;transform:scaleX(0.9226);transform-origin:0 50%">A</span></div>
<div class="cell" style="left:122px;top:242px;width:117px"><span style="display:inline-block;transform:scaleX(1.0895);transform-origin:0 50%">Building A</span></div>
<div class="cell" style="left:242px;top:242px;width:117px"><span style="display:inline-block;transform:scaleX(0.9681);transform-origin:0 50%">00</span></div>
<div class="cell" style="left:362px;top:242px;width:117px"><span style="display:inline-block;transform:scaleX(0.8656);transform-origin:0 50%">LEVEL 0</span></div>
<div class="cell" style="left:482px;top:242px;width:117px"><span style="display:inline-block;transform:scaleX(0.984);transform-origin:0 50%">A.00.02.002</span></div>
<div class="cell" style="left:602px;top:242px;width:129px"><span style="display:inline-block;transform:scaleX(0.9387);transform-origin:0 50%">L0-006</span></div>
<div class="cell" style="left:734px;top:242px;width:117px"><span style="display:inline-block;transform:scaleX(0.9273);transform-origin:0 50%">SHOP 1</span></div>
<div class="cell r" style="left:852px;top:242px;width:100px"><span style="display:inline-block;transform:scaleX(0.9681);transform-origin:100% 50%">50</span></div>
<div class="cell r" style="left:955px;top:242px;width:117px"><span style="display:inline-block;transform:scaleX(0.9836);transform-origin:100% 50%">50.31</span></div>
<div class="cell r" style="left:1075px;top:242px;width:188px"><span style="display:inline-block;transform:scaleX(0.988);transform-origin:100% 50%">0.62</span></div>
<div class="gt" style="left:240px;top:241px"></div>
<div class="cell" style="left:2px;top:262px;width:117px"><span style="display:inline-block;transform:scaleX(0.9226);transform-origin:0 50%">A</span></div>
<div class="cell" style="left:122px;top:262px;width:117px"><span style="display:inline-block;transform:scaleX(1.0895);transform-origin:0 50%">Building A</span></div>
<div class="cell" style="left:242px;top:262px;width:117px"><span style="display:inline-block;transform:scaleX(0.9681);transform-origin:0 50%">00</span></div>
<div class="cell" style="left:362px;top:262px;width:117px"><span style="display:inline-block;transform:scaleX(0.8656);transform-origin:0 50%">LEVEL 0</span></div>
<div class="cell" style="left:482px;top:262px;width:117px"><span style="display:inline-block;transform:scaleX(0.984);transform-origin:0 50%">A.00.02.003</span></div>
<div class="cell" style="left:602px;top:262px;width:129px"><span style="display:inline-block;transform:scaleX(0.9387);transform-origin:0 50%">L0-007</span></div>
<div class="cell" style="left:734px;top:262px;width:117px"><span style="display:inline-block;transform:scaleX(0.9273);transform-origin:0 50%">SHOP 4</span></div>
<div class="cell r" style="left:852px;top:262px;width:100px"><span style="display:inline-block;transform:scaleX(0.9681);transform-origin:100% 50%">50</span></div>
<div class="cell r" style="left:955px;top:262px;width:117px"><span style="display:inline-block;transform:scaleX(0.9836);transform-origin:100% 50%">48.62</span></div>
<div class="cell r" style="left:1075px;top:262px;width:188px"><span style="display:inline-block;transform:scaleX(0.9786);transform-origin:100% 50%">-2.76</span></div>
<div class="gt" style="left:240px;top:261px"></div>
<div class="cell" style="left:2px;top:282px;width:117px"><span style="display:inline-block;transform:scaleX(0.9226);transform-origin:0 50%">A</span></div>
<div class="cell" style="left:122px;top:282px;width:117px"><span style="display:inline-block;transform:scaleX(1.0895);transform-origin:0 50%">Building A</span></div>
<div class="cell" style="left:242px;top:282px;width:117px"><span style="display:inline-block;transform:scaleX(0.9681);transform-origin:0 50%">00</span></div>
<div class="cell" style="left:362px;top:282px;width:117px"><span style="display:inline-block;transform:scaleX(0.8656);transform-origin:0 50%">LEVEL 0</span></div>
<div class="cell" style="left:482px;top:282px;width:117px"><span style="display:inline-block;transform:scaleX(0.984);transform-origin:0 50%">A.00.02.004</span></div>
<div class="cell" style="left:602px;top:282px;width:129px"><span style="display:inline-block;transform:scaleX(0.9387);transform-origin:0 50%">L0-008</span></div>
<div class="cell" style="left:734px;top:282px;width:117px"><span style="display:inline-block;transform:scaleX(0.9273);transform-origin:0 50%">SHOP 3</span></div>
<div class="cell r" style="left:852px;top:282px;width:100px"><span style="display:inline-block;transform:scaleX(0.9681);transform-origin:100% 50%">50</span></div>
<div class="cell r" style="left:955px;top:282px;width:117px"><span style="display:inline-block;transform:scaleX(0.9836);transform-origin:100% 50%">50.79</span></div>
<div class="cell r" style="left:1075px;top:282px;width:188px"><span style="display:inline-block;transform:scaleX(0.988);transform-origin:100% 50%">1.58</span></div>
<div class="gt" style="left:240px;top:281px"></div>
<div class="cell" style="left:2px;top:302px;width:117px"><span style="display:inline-block;transform:scaleX(0.9226);transform-origin:0 50%">A</span></div>
<div class="cell" style="left:122px;top:302px;width:117px"><span style="display:inline-block;transform:scaleX(1.0895);transform-origin:0 50%">Building A</span></div>
<div class="cell" style="left:242px;top:302px;width:117px"><span style="display:inline-block;transform:scaleX(0.9681);transform-origin:0 50%">00</span></div>
<div class="cell" style="left:362px;top:302px;width:117px"><span style="display:inline-block;transform:scaleX(0.8656);transform-origin:0 50%">LEVEL 0</span></div>
<div class="cell" style="left:482px;top:302px;width:117px"><span style="display:inline-block;transform:scaleX(0.984);transform-origin:0 50%">A.00.02.005</span></div>
<div class="cell" style="left:602px;top:302px;width:129px"><span style="display:inline-block;transform:scaleX(0.9387);transform-origin:0 50%">L0-009</span></div>
<div class="cell" style="left:734px;top:302px;width:117px"><span style="display:inline-block;transform:scaleX(0.8653);transform-origin:0 50%">CAFE</span></div>
<div class="cell r" style="left:852px;top:302px;width:100px"><span style="display:inline-block;transform:scaleX(0.9681);transform-origin:100% 50%">30</span></div>
<div class="cell r" style="left:955px;top:302px;width:117px"><span style="display:inline-block;transform:scaleX(0.9836);transform-origin:100% 50%">30.23</span></div>
<div class="cell r" style="left:1075px;top:302px;width:188px"><span style="display:inline-block;transform:scaleX(0.9747);transform-origin:100% 50%">0.766666667</span></div>
<div class="gt" style="left:240px;top:301px"></div>
<div class="cell" style="left:2px;top:322px;width:117px"><span style="display:inline-block;transform:scaleX(0.9226);transform-origin:0 50%">A</span></div>
<div class="cell" style="left:122px;top:322px;width:117px"><span style="display:inline-block;transform:scaleX(1.0895);transform-origin:0 50%">Building A</span></div>
<div class="cell" style="left:242px;top:322px;width:117px"><span style="display:inline-block;transform:scaleX(0.9681);transform-origin:0 50%">00</span></div>
<div class="cell" style="left:362px;top:322px;width:117px"><span style="display:inline-block;transform:scaleX(0.8656);transform-origin:0 50%">LEVEL 0</span></div>
<div class="cell" style="left:482px;top:322px;width:117px"><span style="display:inline-block;transform:scaleX(0.984);transform-origin:0 50%">A.00.02.006</span></div>
<div class="cell" style="left:602px;top:322px;width:129px"><span style="display:inline-block;transform:scaleX(0.9387);transform-origin:0 50%">L0-010</span></div>
<div class="cell" style="left:734px;top:322px;width:117px"><span style="display:inline-block;transform:scaleX(0.8949);transform-origin:0 50%">RESTAURANT</span></div>
<div class="cell r" style="left:852px;top:322px;width:100px"><span style="display:inline-block;transform:scaleX(0.9681);transform-origin:100% 50%">65</span></div>
<div class="cell r" style="left:955px;top:322px;width:117px"><span style="display:inline-block;transform:scaleX(0.9836);transform-origin:100% 50%">65.84</span></div>
<div class="cell r" style="left:1075px;top:322px;width:188px"><span style="display:inline-block;transform:scaleX(0.9747);transform-origin:100% 50%">1.292307692</span></div>
<div class="gt" style="left:240px;top:321px"></div>
<div class="cell" style="left:2px;top:342px;width:117px"><span style="display:inline-block;transform:scaleX(0.9226);transform-origin:0 50%">A</span></div>
<div class="cell" style="left:122px;top:342px;width:117px"><span style="display:inline-block;transform:scaleX(1.0895);transform-origin:0 50%">Building A</span></div>
<div class="cell" style="left:242px;top:342px;width:117px"><span style="display:inline-block;transform:scaleX(0.9681);transform-origin:0 50%">00</span></div>
<div class="cell" style="left:362px;top:342px;width:117px"><span style="display:inline-block;transform:scaleX(0.8656);transform-origin:0 50%">LEVEL 0</span></div>
<div class="cell" style="left:482px;top:342px;width:117px"><span style="display:inline-block;transform:scaleX(0.984);transform-origin:0 50%">A.00.02.007</span></div>
<div class="cell" style="left:602px;top:342px;width:129px"><span style="display:inline-block;transform:scaleX(0.9616);transform-origin:0 50%">L0-011</span></div>
<div class="cell" style="left:734px;top:342px;width:117px"><span style="display:inline-block;transform:scaleX(0.8979);transform-origin:0 50%">BAR</span></div>
<div class="cell r" style="left:852px;top:342px;width:100px"><span style="display:inline-block;transform:scaleX(0.9681);transform-origin:100% 50%">50</span></div>
<div class="cell r" style="left:955px;top:342px;width:117px"><span style="display:inline-block;transform:scaleX(0.9836);transform-origin:100% 50%">48.06</span></div>
<div class="cell r" style="left:1075px;top:342px;width:188px"><span style="display:inline-block;transform:scaleX(0.9786);transform-origin:100% 50%">-3.88</span></div>
<div class="gt" style="left:240px;top:341px"></div>
<div class="cell" style="left:2px;top:362px;width:117px"><span style="display:inline-block;transform:scaleX(0.9226);transform-origin:0 50%">A</span></div>
<div class="cell" style="left:122px;top:362px;width:117px"><span style="display:inline-block;transform:scaleX(1.0895);transform-origin:0 50%">Building A</span></div>
<div class="cell" style="left:242px;top:362px;width:117px"><span style="display:inline-block;transform:scaleX(0.9681);transform-origin:0 50%">00</span></div>
<div class="cell" style="left:362px;top:362px;width:117px"><span style="display:inline-block;transform:scaleX(0.8656);transform-origin:0 50%">LEVEL 0</span></div>
<div class="cell" style="left:482px;top:362px;width:117px"><span style="display:inline-block;transform:scaleX(0.984);transform-origin:0 50%">A.00.03.001</span></div>
<div class="cell" style="left:602px;top:362px;width:129px"><span style="display:inline-block;transform:scaleX(0.9387);transform-origin:0 50%">L0-012</span></div>
<div class="cell" style="left:734px;top:362px;width:117px"><span style="display:inline-block;transform:scaleX(0.9293);transform-origin:0 50%">CIRCULATION</span></div>
<div class="cell r" style="left:852px;top:362px;width:100px"><span style="display:inline-block;transform:scaleX(0.9681);transform-origin:100% 50%">20</span></div>
<div class="cell r" style="left:955px;top:362px;width:117px"><span style="display:inline-block;transform:scaleX(0.9836);transform-origin:100% 50%">23.88</span></div>
<div class="cell r" style="left:1075px;top:362px;width:188px"><span style="display:inline-block;transform:scaleX(0.988);transform-origin:100% 50%">19.4</span></div>
<div class="gt" style="left:240px;top:361px"></div>
<div class="cell" style="left:2px;top:382px;width:117px"><span style="display:inline-block;transform:scaleX(0.9226);transform-origin:0 50%">A</span></div>
<div class="cell" style="left:122px;top:382px;width:117px"><span style="display:inline-block;transform:scaleX(1.0895);transform-origin:0 50%">Building A</span></div>
<div class="cell" style="left:242px;top:382px;width:117px"><span style="display:inline-block;transform:scaleX(0.9681);transform-origin:0 50%">00</span></div>
<div class="cell" style="left:362px;top:382px;width:117px"><span style="display:inline-block;transform:scaleX(0.8656);transform-origin:0 50%">LEVEL 0</span></div>
<div class="cell" style="left:482px;top:382px;width:117px"><span style="display:inline-block;transform:scaleX(0.984);transform-origin:0 50%">A.00.03.002</span></div>
<div class="cell" style="left:602px;top:382px;width:129px"><span style="display:inline-block;transform:scaleX(0.9387);transform-origin:0 50%">L0-013</span></div>
<div class="cell" style="left:734px;top:382px;width:117px"><span style="display:inline-block;transform:scaleX(0.9293);transform-origin:0 50%">CIRCULATION</span></div>
<div class="cell r" style="left:852px;top:382px;width:100px"><span style="display:inline-block;transform:scaleX(0.9681);transform-origin:100% 50%">20</span></div>
<div class="cell r" style="left:955px;top:382px;width:117px"><span style="display:inline-block;transform:scaleX(0.9836);transform-origin:100% 50%">23.67</span></div>
<div class="cell r" style="left:1075px;top:382px;width:188px"><span style="display:inline-block;transform:scaleX(0.9836);transform-origin:100% 50%">18.35</span></div>
<div class="gt" style="left:240px;top:381px"></div>
<div class="cell" style="left:2px;top:402px;width:117px"><span style="display:inline-block;transform:scaleX(0.9226);transform-origin:0 50%">A</span></div>
<div class="cell" style="left:122px;top:402px;width:117px"><span style="display:inline-block;transform:scaleX(1.0895);transform-origin:0 50%">Building A</span></div>
<div class="cell" style="left:242px;top:402px;width:117px"><span style="display:inline-block;transform:scaleX(0.9681);transform-origin:0 50%">00</span></div>
<div class="cell" style="left:362px;top:402px;width:117px"><span style="display:inline-block;transform:scaleX(0.8656);transform-origin:0 50%">LEVEL 0</span></div>
<div class="cell" style="left:482px;top:402px;width:117px"><span style="display:inline-block;transform:scaleX(0.984);transform-origin:0 50%">A.00.03.003</span></div>
<div class="cell" style="left:602px;top:402px;width:129px"><span style="display:inline-block;transform:scaleX(0.9387);transform-origin:0 50%">L0-014</span></div>
<div class="cell" style="left:734px;top:402px;width:117px"><span style="display:inline-block;transform:scaleX(0.9293);transform-origin:0 50%">CIRCULATION</span></div>
<div class="cell r" style="left:852px;top:402px;width:100px"><span style="display:inline-block;transform:scaleX(0.9681);transform-origin:100% 50%">20</span></div>
<div class="cell r" style="left:955px;top:402px;width:117px"><span style="display:inline-block;transform:scaleX(0.9836);transform-origin:100% 50%">20.76</span></div>
<div class="cell r" style="left:1075px;top:402px;width:188px"><span style="display:inline-block;transform:scaleX(0.9959);transform-origin:100% 50%">3.8</span></div>
<div class="gt" style="left:240px;top:401px"></div>
<div class="cell" style="left:2px;top:422px;width:117px"><span style="display:inline-block;transform:scaleX(0.9226);transform-origin:0 50%">A</span></div>
<div class="cell" style="left:122px;top:422px;width:117px"><span style="display:inline-block;transform:scaleX(1.0895);transform-origin:0 50%">Building A</span></div>
<div class="cell" style="left:242px;top:422px;width:117px"><span style="display:inline-block;transform:scaleX(0.9681);transform-origin:0 50%">00</span></div>
<div class="cell" style="left:362px;top:422px;width:117px"><span style="display:inline-block;transform:scaleX(0.8656);transform-origin:0 50%">LEVEL 0</span></div>
<div class="cell" style="left:482px;top:422px;width:117px"><span style="display:inline-block;transform:scaleX(0.984);transform-origin:0 50%">A.00.03.004</span></div>
<div class="cell" style="left:602px;top:422px;width:129px"><span style="display:inline-block;transform:scaleX(0.9387);transform-origin:0 50%">L0-015</span></div>
<div class="cell" style="left:734px;top:422px;width:117px"><span style="display:inline-block;transform:scaleX(0.898);transform-origin:0 50%">LIFT</span></div>
<div class="cell r" style="left:852px;top:422px;width:100px"><span style="display:inline-block;transform:scaleX(0.9681);transform-origin:100% 50%">6</span></div>
<div class="cell r" style="left:955px;top:422px;width:117px"><span style="display:inline-block;transform:scaleX(0.988);transform-origin:100% 50%">6.34</span></div>
<div class="cell r" style="left:1075px;top:422px;width:188px"><span style="display:inline-block;transform:scaleX(0.9747);transform-origin:100% 50%">5.666666667</span></div>
<div class="gt" style="left:240px;top:421px"></div>
<div class="cell" style="left:2px;top:442px;width:117px"><span style="display:inline-block;transform:scaleX(0.9226);transform-origin:0 50%">A</span></div>
<div class="cell" style="left:122px;top:442px;width:117px"><span style="display:inline-block;transform:scaleX(1.0895);transform-origin:0 50%">Building A</span></div>
<div class="cell" style="left:242px;top:442px;width:117px"><span style="display:inline-block;transform:scaleX(0.9681);transform-origin:0 50%">00</span></div>
<div class="cell" style="left:362px;top:442px;width:117px"><span style="display:inline-block;transform:scaleX(0.8656);transform-origin:0 50%">LEVEL 0</span></div>
<div class="cell" style="left:482px;top:442px;width:117px"><span style="display:inline-block;transform:scaleX(0.984);transform-origin:0 50%">A.00.03.005</span></div>
<div class="cell" style="left:602px;top:442px;width:129px"><span style="display:inline-block;transform:scaleX(0.9387);transform-origin:0 50%">L0-016</span></div>
<div class="cell" style="left:734px;top:442px;width:117px"><span style="display:inline-block;transform:scaleX(0.898);transform-origin:0 50%">LIFT</span></div>
<div class="cell r" style="left:852px;top:442px;width:100px"><span style="display:inline-block;transform:scaleX(0.9681);transform-origin:100% 50%">6</span></div>
<div class="cell r" style="left:955px;top:442px;width:117px"><span style="display:inline-block;transform:scaleX(0.988);transform-origin:100% 50%">6.29</span></div>
<div class="cell r" style="left:1075px;top:442px;width:188px"><span style="display:inline-block;transform:scaleX(0.9747);transform-origin:100% 50%">4.833333333</span></div>
<div class="gt" style="left:240px;top:441px"></div>
<div class="cell" style="left:2px;top:462px;width:117px"><span style="display:inline-block;transform:scaleX(0.9226);transform-origin:0 50%">A</span></div>
<div class="cell" style="left:122px;top:462px;width:117px"><span style="display:inline-block;transform:scaleX(1.0895);transform-origin:0 50%">Building A</span></div>
<div class="cell" style="left:242px;top:462px;width:117px"><span style="display:inline-block;transform:scaleX(0.9681);transform-origin:0 50%">00</span></div>
<div class="cell" style="left:362px;top:462px;width:117px"><span style="display:inline-block;transform:scaleX(0.8656);transform-origin:0 50%">LEVEL 0</span></div>
<div class="cell" style="left:482px;top:462px;width:117px"><span style="display:inline-block;transform:scaleX(0.984);transform-origin:0 50%">A.00.03.006</span></div>
<div class="cell" style="left:602px;top:462px;width:129px"><span style="display:inline-block;transform:scaleX(0.9387);transform-origin:0 50%">L0-017</span></div>
<div class="cell" style="left:734px;top:462px;width:117px"><span style="display:inline-block;transform:scaleX(0.898);transform-origin:0 50%">LIFT</span></div>
<div class="cell r" style="left:852px;top:462px;width:100px"><span style="display:inline-block;transform:scaleX(0.9681);transform-origin:100% 50%">6</span></div>
<div class="cell r" style="left:955px;top:462px;width:117px"><span style="display:inline-block;transform:scaleX(0.988);transform-origin:100% 50%">5.59</span></div>
<div class="cell r" style="left:1075px;top:462px;width:188px"><span style="display:inline-block;transform:scaleX(0.972);transform-origin:100% 50%">-6.833333333</span></div>
<div class="gt" style="left:240px;top:461px"></div>
<div class="cell" style="left:2px;top:482px;width:117px"><span style="display:inline-block;transform:scaleX(0.9226);transform-origin:0 50%">A</span></div>
<div class="cell" style="left:122px;top:482px;width:117px"><span style="display:inline-block;transform:scaleX(1.0895);transform-origin:0 50%">Building A</span></div>
<div class="cell" style="left:242px;top:482px;width:117px"><span style="display:inline-block;transform:scaleX(0.9681);transform-origin:0 50%">00</span></div>
<div class="cell" style="left:362px;top:482px;width:117px"><span style="display:inline-block;transform:scaleX(0.8656);transform-origin:0 50%">LEVEL 0</span></div>
<div class="cell" style="left:482px;top:482px;width:117px"><span style="display:inline-block;transform:scaleX(0.984);transform-origin:0 50%">A.00.03.007</span></div>
<div class="cell" style="left:602px;top:482px;width:129px"><span style="display:inline-block;transform:scaleX(0.9387);transform-origin:0 50%">L0-018</span></div>
<div class="cell" style="left:734px;top:482px;width:117px"><span style="display:inline-block;transform:scaleX(0.9428);transform-origin:0 50%">PROMENADE</span></div>
<div class="cell r" style="left:852px;top:482px;width:100px"><span style="display:inline-block;transform:scaleX(0.9681);transform-origin:100% 50%">60</span></div>
<div class="cell r" style="left:955px;top:482px;width:117px"><span style="display:inline-block;transform:scaleX(0.9836);transform-origin:100% 50%">61.21</span></div>
<div class="cell r" style="left:1075px;top:482px;width:188px"><span style="display:inline-block;transform:scaleX(0.9747);transform-origin:100% 50%">2.016666667</span></div>
<div class="gt" style="left:240px;top:481px"></div>
<div class="cell" style="left:2px;top:502px;width:117px"><span style="display:inline-block;transform:scaleX(0.9226);transform-origin:0 50%">A</span></div>
<div class="cell" style="left:122px;top:502px;width:117px"><span style="display:inline-block;transform:scaleX(1.0895);transform-origin:0 50%">Building A</span></div>
<div class="cell" style="left:242px;top:502px;width:117px"><span style="display:inline-block;transform:scaleX(0.9681);transform-origin:0 50%">00</span></div>
<div class="cell" style="left:362px;top:502px;width:117px"><span style="display:inline-block;transform:scaleX(0.8656);transform-origin:0 50%">LEVEL 0</span></div>
<div class="cell" style="left:482px;top:502px;width:117px"><span style="display:inline-block;transform:scaleX(0.984);transform-origin:0 50%">A.00.03.008</span></div>
<div class="cell" style="left:602px;top:502px;width:129px"><span style="display:inline-block;transform:scaleX(0.9387);transform-origin:0 50%">L0-019</span></div>
<div class="cell" style="left:734px;top:502px;width:117px"><span style="display:inline-block;transform:scaleX(0.8557);transform-origin:0 50%">RISER</span></div>
<div class="cell r" style="left:852px;top:502px;width:100px"><span style="display:inline-block;transform:scaleX(0.9681);transform-origin:100% 50%">3</span></div>
<div class="cell r" style="left:955px;top:502px;width:117px"><span style="display:inline-block;transform:scaleX(0.988);transform-origin:100% 50%">3.58</span></div>
<div class="cell r" style="left:1075px;top:502px;width:188px"><span style="display:inline-block;transform:scaleX(0.9747);transform-origin:100% 50%">19.33333333</span></div>
<div class="gt" style="left:240px;top:501px"></div>
<div class="cell" style="left:2px;top:522px;width:117px"><span style="display:inline-block;transform:scaleX(0.9226);transform-origin:0 50%">A</span></div>
<div class="cell" style="left:122px;top:522px;width:117px"><span style="display:inline-block;transform:scaleX(1.0895);transform-origin:0 50%">Building A</span></div>
<div class="cell" style="left:242px;top:522px;width:117px"><span style="display:inline-block;transform:scaleX(0.9681);transform-origin:0 50%">00</span></div>
<div class="cell" style="left:362px;top:522px;width:117px"><span style="display:inline-block;transform:scaleX(0.8656);transform-origin:0 50%">LEVEL 0</span></div>
<div class="cell" style="left:482px;top:522px;width:117px"><span style="display:inline-block;transform:scaleX(0.984);transform-origin:0 50%">A.00.03.009</span></div>
<div class="cell" style="left:602px;top:522px;width:129px"><span style="display:inline-block;transform:scaleX(0.9387);transform-origin:0 50%">L0-020</span></div>
<div class="cell" style="left:734px;top:522px;width:117px"><span style="display:inline-block;transform:scaleX(0.8557);transform-origin:0 50%">RISER</span></div>
<div class="cell r" style="left:852px;top:522px;width:100px"><span style="display:inline-block;transform:scaleX(0.9681);transform-origin:100% 50%">3</span></div>
<div class="cell r" style="left:955px;top:522px;width:117px"><span style="display:inline-block;transform:scaleX(0.988);transform-origin:100% 50%">2.59</span></div>
<div class="cell r" style="left:1075px;top:522px;width:188px"><span style="display:inline-block;transform:scaleX(0.972);transform-origin:100% 50%">-13.66666667</span></div>
<div class="gt" style="left:240px;top:521px"></div>
<div class="cell" style="left:2px;top:542px;width:117px"><span style="display:inline-block;transform:scaleX(0.9226);transform-origin:0 50%">A</span></div>
<div class="cell" style="left:122px;top:542px;width:117px"><span style="display:inline-block;transform:scaleX(1.0895);transform-origin:0 50%">Building A</span></div>
<div class="cell" style="left:242px;top:542px;width:117px"><span style="display:inline-block;transform:scaleX(0.9681);transform-origin:0 50%">00</span></div>
<div class="cell" style="left:362px;top:542px;width:117px"><span style="display:inline-block;transform:scaleX(0.8656);transform-origin:0 50%">LEVEL 0</span></div>
<div class="cell" style="left:482px;top:542px;width:117px"><span style="display:inline-block;transform:scaleX(0.984);transform-origin:0 50%">A.00.03.010</span></div>
<div class="cell" style="left:602px;top:542px;width:129px"><span style="display:inline-block;transform:scaleX(0.9387);transform-origin:0 50%">L0-021</span></div>
<div class="cell" style="left:734px;top:542px;width:117px"><span style="display:inline-block;transform:scaleX(0.8557);transform-origin:0 50%">RISER</span></div>
<div class="cell r" style="left:852px;top:542px;width:100px"><span style="display:inline-block;transform:scaleX(0.9681);transform-origin:100% 50%">3</span></div>
<div class="cell r" style="left:955px;top:542px;width:117px"><span style="display:inline-block;transform:scaleX(0.988);transform-origin:100% 50%">3.48</span></div>
<div class="cell r" style="left:1075px;top:542px;width:188px"><span style="display:inline-block;transform:scaleX(0.9681);transform-origin:100% 50%">16</span></div>
<div class="gt" style="left:240px;top:541px"></div>
<div class="cell" style="left:2px;top:562px;width:117px"><span style="display:inline-block;transform:scaleX(0.9226);transform-origin:0 50%">A</span></div>
<div class="cell" style="left:122px;top:562px;width:117px"><span style="display:inline-block;transform:scaleX(1.0895);transform-origin:0 50%">Building A</span></div>
<div class="cell" style="left:242px;top:562px;width:117px"><span style="display:inline-block;transform:scaleX(0.9681);transform-origin:0 50%">00</span></div>
<div class="cell" style="left:362px;top:562px;width:117px"><span style="display:inline-block;transform:scaleX(0.8656);transform-origin:0 50%">LEVEL 0</span></div>
<div class="cell" style="left:482px;top:562px;width:117px"><span style="display:inline-block;transform:scaleX(0.9977);transform-origin:0 50%">A.00.03.011</span></div>
<div class="cell" style="left:602px;top:562px;width:129px"><span style="display:inline-block;transform:scaleX(0.9387);transform-origin:0 50%">L0-022</span></div>
<div class="cell" style="left:734px;top:562px;width:117px"><span style="display:inline-block;transform:scaleX(0.9111);transform-origin:0 50%">STAIR</span></div>
<div class="cell r" style="left:852px;top:562px;width:100px"><span style="display:inline-block;transform:scaleX(0.9681);transform-origin:100% 50%">18</span></div>
<div class="cell r" style="left:955px;top:562px;width:117px"><span style="display:inline-block;transform:scaleX(0.9836);transform-origin:100% 50%">17.62</span></div>
<div class="cell r" style="left:1075px;top:562px;width:188px"><span style="display:inline-block;transform:scaleX(1.0755);transform-origin:100% 50%">-2.111111111</span></div>
<div class="gt" style="left:240px;top:561px"></div>
<div class="cell" style="left:2px;top:582px;width:117px"><span style="display:inline-block;transform:scaleX(0.9226);transform-origin:0 50%">A</span></div>
<div class="cell" style="left:122px;top:582px;width:117px"><span style="display:inline-block;transform:scaleX(1.0895);transform-origin:0 50%">Building A</span></div>
<div class="cell" style="left:242px;top:582px;width:117px"><span style="display:inline-block;transform:scaleX(0.9681);transform-origin:0 50%">00</span></div>
<div class="cell" style="left:362px;top:582px;width:117px"><span style="display:inline-block;transform:scaleX(0.8656);transform-origin:0 50%">LEVEL 0</span></div>
<div class="cell" style="left:482px;top:582px;width:117px"><span style="display:inline-block;transform:scaleX(0.984);transform-origin:0 50%">A.00.03.012</span></div>
<div class="cell" style="left:602px;top:582px;width:129px"><span style="display:inline-block;transform:scaleX(0.9387);transform-origin:0 50%">L0-023</span></div>
<div class="cell" style="left:734px;top:582px;width:117px"><span style="display:inline-block;transform:scaleX(0.9111);transform-origin:0 50%">STAIR</span></div>
<div class="cell r" style="left:852px;top:582px;width:100px"><span style="display:inline-block;transform:scaleX(0.9681);transform-origin:100% 50%">14</span></div>
<div class="cell r" style="left:955px;top:582px;width:117px"><span style="display:inline-block;transform:scaleX(0.9836);transform-origin:100% 50%">13.97</span></div>
<div class="cell r" style="left:1075px;top:582px;width:188px"><span style="display:inline-block;transform:scaleX(0.972);transform-origin:100% 50%">-0.214285714</span></div>
<div class="gt" style="left:240px;top:581px"></div>
<div class="cell" style="left:2px;top:602px;width:117px"><span style="display:inline-block;transform:scaleX(0.9226);transform-origin:0 50%">A</span></div>
<div class="cell" style="left:122px;top:602px;width:117px"><span style="display:inline-block;transform:scaleX(1.0895);transform-origin:0 50%">Building A</span></div>
<div class="cell" style="left:242px;top:602px;width:117px"><span style="display:inline-block;transform:scaleX(0.9681);transform-origin:0 50%">00</span></div>
<div class="cell" style="left:362px;top:602px;width:117px"><span style="display:inline-block;transform:scaleX(0.8656);transform-origin:0 50%">LEVEL 0</span></div>
<div class="cell" style="left:482px;top:602px;width:117px"><span style="display:inline-block;transform:scaleX(0.984);transform-origin:0 50%">A.00.03.013</span></div>
<div class="cell" style="left:602px;top:602px;width:129px"><span style="display:inline-block;transform:scaleX(0.9387);transform-origin:0 50%">L0-024</span></div>
<div class="cell" style="left:734px;top:602px;width:117px"><span style="display:inline-block;transform:scaleX(0.8754);transform-origin:0 50%">STORE</span></div>
<div class="cell r" style="left:852px;top:602px;width:100px"><span style="display:inline-block;transform:scaleX(0.9681);transform-origin:100% 50%">5</span></div>
<div class="cell r" style="left:955px;top:602px;width:117px"><span style="display:inline-block;transform:scaleX(0.988);transform-origin:100% 50%">5.37</span></div>
<div class="cell r" style="left:1075px;top:602px;width:188px"><span style="display:inline-block;transform:scaleX(0.9959);transform-origin:100% 50%">7.4</span></div>
<div class="gt" style="left:240px;top:601px"></div>
<div class="cell" style="left:2px;top:622px;width:117px"><span style="display:inline-block;transform:scaleX(0.9226);transform-origin:0 50%">A</span></div>
<div class="cell" style="left:122px;top:622px;width:117px"><span style="display:inline-block;transform:scaleX(1.0895);transform-origin:0 50%">Building A</span></div>
<div class="cell" style="left:242px;top:622px;width:117px"><span style="display:inline-block;transform:scaleX(0.9681);transform-origin:0 50%">01</span></div>
<div class="cell" style="left:362px;top:622px;width:117px"><span style="display:inline-block;transform:scaleX(0.8656);transform-origin:0 50%">LEVEL 1</span></div>
<div class="cell" style="left:482px;top:622px;width:117px"><span style="display:inline-block;transform:scaleX(0.984);transform-origin:0 50%">A.01.01.001</span></div>
<div class="cell" style="left:602px;top:622px;width:129px"><span style="display:inline-block;transform:scaleX(0.9387);transform-origin:0 50%">L1-001</span></div>
<div class="cell" style="left:734px;top:622px;width:117px"><span style="display:inline-block;transform:scaleX(0.9381);transform-origin:0 50%">BRISBANE ROOM</span></div>
<div class="cell r" style="left:852px;top:622px;width:100px"><span style="display:inline-block;transform:scaleX(0.9681);transform-origin:100% 50%">42</span></div>
<div class="cell r" style="left:955px;top:622px;width:117px"><span style="display:inline-block;transform:scaleX(0.9836);transform-origin:100% 50%">40.86</span></div>
<div class="cell r" style="left:1075px;top:622px;width:188px"><span style="display:inline-block;transform:scaleX(0.972);transform-origin:100% 50%">-2.714285714</span></div>
<div class="gt" style="left:240px;top:621px"></div>
<div class="cell" style="left:2px;top:642px;width:117px"><span style="display:inline-block;transform:scaleX(0.9226);transform-origin:0 50%">A</span></div>
<div class="cell" style="left:122px;top:642px;width:117px"><span style="display:inline-block;transform:scaleX(1.0895);transform-origin:0 50%">Building A</span></div>
<div class="cell" style="left:242px;top:642px;width:117px"><span style="display:inline-block;transform:scaleX(0.9681);transform-origin:0 50%">01</span></div>
<div class="cell" style="left:362px;top:642px;width:117px"><span style="display:inline-block;transform:scaleX(0.8656);transform-origin:0 50%">LEVEL 1</span></div>
<div class="cell" style="left:482px;top:642px;width:117px"><span style="display:inline-block;transform:scaleX(0.984);transform-origin:0 50%">A.01.01.002</span></div>
<div class="cell" style="left:602px;top:642px;width:129px"><span style="display:inline-block;transform:scaleX(0.9387);transform-origin:0 50%">L1-002</span></div>
<div class="cell" style="left:734px;top:642px;width:117px"><span style="display:inline-block;transform:scaleX(0.9252);transform-origin:0 50%">SYDNEY ROOM</span></div>
<div class="cell r" style="left:852px;top:642px;width:100px"><span style="display:inline-block;transform:scaleX(0.9681);transform-origin:100% 50%">42</span></div>
<div class="cell r" style="left:955px;top:642px;width:117px"><span style="display:inline-block;transform:scaleX(0.9836);transform-origin:100% 50%">44.14</span></div>
<div class="cell r" style="left:1075px;top:642px;width:188px"><span style="display:inline-block;transform:scaleX(0.9747);transform-origin:100% 50%">5.095238095</span></div>
<div class="gt" style="left:240px;top:641px"></div>
<div class="cell" style="left:2px;top:662px;width:117px"><span style="display:inline-block;transform:scaleX(0.9226);transform-origin:0 50%">A</span></div>
<div class="cell" style="left:122px;top:662px;width:117px"><span style="display:inline-block;transform:scaleX(1.0895);transform-origin:0 50%">Building A</span></div>
<div class="cell" style="left:242px;top:662px;width:117px"><span style="display:inline-block;transform:scaleX(0.9681);transform-origin:0 50%">01</span></div>
<div class="cell" style="left:362px;top:662px;width:117px"><span style="display:inline-block;transform:scaleX(0.8656);transform-origin:0 50%">LEVEL 1</span></div>
<div class="cell" style="left:482px;top:662px;width:117px"><span style="display:inline-block;transform:scaleX(0.984);transform-origin:0 50%">A.01.01.003</span></div>
<div class="cell" style="left:602px;top:662px;width:129px"><span style="display:inline-block;transform:scaleX(0.9387);transform-origin:0 50%">L1-003</span></div>
<div class="cell" style="left:734px;top:662px;width:117px"><span style="display:inline-block;transform:scaleX(0.9572);transform-origin:0 50%">MELBOURNE ROOM</span></div>
<div class="cell r" style="left:852px;top:662px;width:100px"><span style="display:inline-block;transform:scaleX(0.9681);transform-origin:100% 50%">45</span></div>
<div class="cell r" style="left:955px;top:662px;width:117px"><span style="display:inline-block;transform:scaleX(0.9836);transform-origin:100% 50%">47.73</span></div>
<div class="cell r" style="left:1075px;top:662px;width:188px"><span style="display:inline-block;transform:scaleX(0.9747);transform-origin:100% 50%">6.066666667</span></div>
<div class="gt" style="left:240px;top:661px"></div>
<div class="cell" style="left:2px;top:682px;width:117px"><span style="display:inline-block;transform:scaleX(0.9226);transform-origin:0 50%">A</span></div>
<div class="cell" style="left:122px;top:682px;width:117px"><span style="display:inline-block;transform:scaleX(1.0895);transform-origin:0 50%">Building A</span></div>
<div class="cell" style="left:242px;top:682px;width:117px"><span style="display:inline-block;transform:scaleX(0.9681);transform-origin:0 50%">01</span></div>
<div class="cell" style="left:362px;top:682px;width:117px"><span style="display:inline-block;transform:scaleX(0.8656);transform-origin:0 50%">LEVEL 1</span></div>
<div class="cell" style="left:482px;top:682px;width:117px"><span style="display:inline-block;transform:scaleX(0.984);transform-origin:0 50%">A.01.02.001</span></div>
<div class="cell" style="left:602px;top:682px;width:129px"><span style="display:inline-block;transform:scaleX(0.9387);transform-origin:0 50%">L1-004</span></div>
<div class="cell" style="left:734px;top:682px;width:117px"><span style="display:inline-block;transform:scaleX(0.9219);transform-origin:0 50%">EXHIBITION SPACE</span></div>
<div class="cell r" style="left:852px;top:682px;width:100px"><span style="display:inline-block;transform:scaleX(0.9681);transform-origin:100% 50%">150</span></div>
<div class="cell r" style="left:955px;top:682px;width:117px"><span style="display:inline-block;transform:scaleX(0.9808);transform-origin:100% 50%">158.47</span></div>
<div class="cell r" style="left:1075px;top:682px;width:188px"><span style="display:inline-block;transform:scaleX(0.9747);transform-origin:100% 50%">5.646666667</span></div>
<div class="gt" style="left:240px;top:681px"></div>
<div class="cell" style="left:2px;top:702px;width:117px"><span style="display:inline-block;transform:scaleX(0.9226);transform-origin:0 50%">A</span></div>
<div class="cell" style="left:122px;top:702px;width:117px"><span style="display:inline-block;transform:scaleX(1.0895);transform-origin:0 50%">Building A</span></div>
<div class="cell" style="left:242px;top:702px;width:117px"><span style="display:inline-block;transform:scaleX(0.9681);transform-origin:0 50%">01</span></div>
<div class="cell" style="left:362px;top:702px;width:117px"><span style="display:inline-block;transform:scaleX(0.8656);transform-origin:0 50%">LEVEL 1</span></div>
<div class="cell" style="left:482px;top:702px;width:117px"><span style="display:inline-block;transform:scaleX(0.984);transform-origin:0 50%">A.01.02.002</span></div>
<div class="cell" style="left:602px;top:702px;width:129px"><span style="display:inline-block;transform:scaleX(0.9387);transform-origin:0 50%">L1-005</span></div>
<div class="cell" style="left:734px;top:702px;width:117px"><span style="display:inline-block;transform:scaleX(0.9559);transform-origin:0 50%">MALE WC</span></div>
<div class="cell r" style="left:852px;top:702px;width:100px"><span style="display:inline-block;transform:scaleX(0.9681);transform-origin:100% 50%">30</span></div>
<div class="cell r" style="left:955px;top:702px;width:117px"><span style="display:inline-block;transform:scaleX(0.9836);transform-origin:100% 50%">32.02</span></div>
<div class="cell r" style="left:1075px;top:702px;width:188px"><span style="display:inline-block;transform:scaleX(0.9747);transform-origin:100% 50%">6.733333333</span></div>
<div class="gt" style="left:240px;top:701px"></div>
<div class="cell" style="left:2px;top:722px;width:117px"><span style="display:inline-block;transform:scaleX(0.9226);transform-origin:0 50%">A</span></div>
<div class="cell" style="left:122px;top:722px;width:117px"><span style="display:inline-block;transform:scaleX(1.0895);transform-origin:0 50%">Building A</span></div>
<div class="cell" style="left:242px;top:722px;width:117px"><span style="display:inline-block;transform:scaleX(0.9681);transform-origin:0 50%">01</span></div>
<div class="cell" style="left:362px;top:722px;width:117px"><span style="display:inline-block;transform:scaleX(0.8656);transform-origin:0 50%">LEVEL 1</span></div>
<div class="cell" style="left:482px;top:722px;width:117px"><span style="display:inline-block;transform:scaleX(0.984);transform-origin:0 50%">A.01.02.003</span></div>
<div class="cell" style="left:602px;top:722px;width:129px"><span style="display:inline-block;transform:scaleX(0.9387);transform-origin:0 50%">L1-006</span></div>
<div class="cell" style="left:734px;top:722px;width:117px"><span style="display:inline-block;transform:scaleX(0.9316);transform-origin:0 50%">FEMALE WC</span></div>
<div class="cell r" style="left:852px;top:722px;width:100px"><span style="display:inline-block;transform:scaleX(0.9681);transform-origin:100% 50%">30</span></div>
<div class="cell r" style="left:955px;top:722px;width:117px"><span style="display:inline-block;transform:scaleX(0.9836);transform-origin:100% 50%">30.38</span></div>
<div class="cell r" style="left:1075px;top:722px;width:188px"><span style="display:inline-block;transform:scaleX(0.9747);transform-origin:100% 50%">1.266666667</span></div>
<div class="gt" style="left:240px;top:721px"></div>
<div class="cell" style="left:2px;top:744px;width:117px"><span style="display:inline-block;transform:scaleX(0.9226);transform-origin:0 50%">A</span></div>
<div class="cell" style="left:122px;top:744px;width:117px"><span style="display:inline-block;transform:scaleX(1.0895);transform-origin:0 50%">Building A</span></div>
<div class="cell" style="left:242px;top:744px;width:117px"><span style="display:inline-block;transform:scaleX(0.9681);transform-origin:0 50%">01</span></div>
<div class="cell" style="left:362px;top:744px;width:117px"><span style="display:inline-block;transform:scaleX(0.8656);transform-origin:0 50%">LEVEL 1</span></div>
<div class="cell" style="left:482px;top:744px;width:117px"><span style="display:inline-block;transform:scaleX(0.984);transform-origin:0 50%">A.01.02.004</span></div>
<div class="cell" style="left:602px;top:744px;width:129px"><span style="display:inline-block;transform:scaleX(0.9387);transform-origin:0 50%">L1-007</span></div>
<div class="cell" style="left:734px;top:744px;width:117px"><span style="display:inline-block;transform:scaleX(0.8792);transform-origin:0 50%">ACCESSIBLE WC</span></div>
<div class="cell r" style="left:852px;top:744px;width:100px"><span style="display:inline-block;transform:scaleX(0.9681);transform-origin:100% 50%">6</span></div>
<div class="cell r" style="left:955px;top:744px;width:117px"><span style="display:inline-block;transform:scaleX(0.988);transform-origin:100% 50%">6.12</span></div>
<div class="cell r" style="left:1075px;top:744px;width:188px"><span style="display:inline-block;transform:scaleX(0.9681);transform-origin:100% 50%">2</span></div>
<div class="gt" style="left:240px;top:741px"></div>
<svg class="a" style="left:1024px;top:18px" width="240" height="70" viewBox="1050 290 240 70"><defs><clipPath id="oc"><path d="M1060 294 H1103 V319 A18 18 0 0 1 1085 337 H1060 Z"/></clipPath></defs><path d="M1060 294 H1103 V319 A18 18 0 0 1 1085 337 H1060 Z" fill="#e24f2c"/><path d="M1092 308 H1117 V351 H1074 V326 A18 18 0 0 1 1092 308 Z" fill="#8b8786"/><path d="M1092 308 H1117 V351 H1074 V326 A18 18 0 0 1 1092 308 Z" fill="#762a18" clip-path="url(#oc)"/></svg>
<div class="t" style="left:1104px;top:28px;font-size:43px;color:#3a3532;-webkit-text-stroke:1.1px #3a3532;letter-spacing:0.5px">dRofus</div>
<div class="t" style="left:1105px;top:71px;font-size:9.5px;color:#bcbcbc;letter-spacing:0.75px">A NEMETSCHEK COMPANY</div>
</div>
<div class="a" style="left:0;top:252px;width:1660px;height:20px;background:#252525"></div>
<div class="a" style="left:25px;top:252px;width:1px;height:20px;background:#5a5a5a"></div>
<div class="t" style="left:65px;width:40px;text-align:center;top:257px;font-size:12px;color:#e8e8e8">A</div>
<div class="a" style="left:145px;top:252px;width:1px;height:19px;background:#5a5a5a"></div>
<div class="t" style="left:185px;width:40px;text-align:center;top:257px;font-size:12px;color:#e8e8e8">B</div>
<div class="a" style="left:265px;top:252px;width:1px;height:19px;background:#5a5a5a"></div>
<div class="t" style="left:305px;width:40px;text-align:center;top:257px;font-size:12px;color:#e8e8e8">C</div>
<div class="a" style="left:385px;top:252px;width:1px;height:19px;background:#5a5a5a"></div>
<div class="t" style="left:425px;width:40px;text-align:center;top:257px;font-size:12px;color:#e8e8e8">D</div>
<div class="a" style="left:505px;top:252px;width:1px;height:19px;background:#5a5a5a"></div>
<div class="t" style="left:545px;width:40px;text-align:center;top:257px;font-size:12px;color:#e8e8e8">E</div>
<div class="a" style="left:625px;top:252px;width:1px;height:19px;background:#5a5a5a"></div>
<div class="t" style="left:671px;width:40px;text-align:center;top:257px;font-size:12px;color:#e8e8e8">F</div>
<div class="a" style="left:757px;top:252px;width:1px;height:19px;background:#5a5a5a"></div>
<div class="t" style="left:797px;width:40px;text-align:center;top:257px;font-size:12px;color:#e8e8e8">G</div>
<div class="a" style="left:877px;top:252px;width:1px;height:19px;background:#5a5a5a"></div>
<div class="t" style="left:909px;width:40px;text-align:center;top:257px;font-size:12px;color:#e8e8e8">H</div>
<div class="a" style="left:980px;top:252px;width:1px;height:19px;background:#5a5a5a"></div>
<div class="t" style="left:1020px;width:40px;text-align:center;top:257px;font-size:12px;color:#e8e8e8">I</div>
<div class="a" style="left:1100px;top:252px;width:1px;height:19px;background:#5a5a5a"></div>
<div class="t" style="left:1176px;width:40px;text-align:center;top:257px;font-size:12px;color:#e8e8e8">J</div>
<div class="a" style="left:1291px;top:252px;width:1px;height:19px;background:#5a5a5a"></div>
<div class="t" style="left:1304px;width:40px;text-align:center;top:257px;font-size:12px;color:#e8e8e8">K</div>
<div class="a" style="left:1356px;top:252px;width:1px;height:19px;background:#5a5a5a"></div>
<div class="t" style="left:1369px;width:40px;text-align:center;top:257px;font-size:12px;color:#e8e8e8">L</div>
<div class="a" style="left:1421px;top:252px;width:1px;height:19px;background:#5a5a5a"></div>
<div class="t" style="left:1434px;width:40px;text-align:center;top:257px;font-size:12px;color:#e8e8e8">M</div>
<div class="a" style="left:1486px;top:252px;width:1px;height:19px;background:#5a5a5a"></div>
<div class="t" style="left:1499px;width:40px;text-align:center;top:257px;font-size:12px;color:#e8e8e8">N</div>
<div class="a" style="left:1551px;top:252px;width:1px;height:19px;background:#5a5a5a"></div>
<div class="t" style="left:1564px;width:40px;text-align:center;top:257px;font-size:12px;color:#e8e8e8">O</div>
<div class="a" style="left:1616px;top:252px;width:1px;height:19px;background:#5a5a5a"></div>
<div class="t" style="left:1629px;width:40px;text-align:center;top:257px;font-size:12px;color:#e8e8e8">P</div>
<div class="a" style="left:0;top:271px;width:1659px;height:1px;background:#5a5a5a"></div>
<div class="a" style="left:10px;top:256px;width:0;height:0;border-left:12px solid transparent;border-bottom:12px solid #6a6a6a"></div>
<div class="t" style="left:0;width:25px;text-align:center;top:277px;font-size:12px;color:#e8e8e8">1</div>
<div class="a" style="left:0;top:291px;width:25px;height:1px;background:#5a5a5a"></div>
<div class="t" style="left:0;width:25px;text-align:center;top:306px;font-size:12px;color:#e8e8e8">2</div>
<div class="a" style="left:0;top:322px;width:25px;height:1px;background:#5a5a5a"></div>
<div class="t" style="left:0;width:25px;text-align:center;top:328px;font-size:12px;color:#e8e8e8">3</div>
<div class="a" style="left:0;top:342px;width:25px;height:1px;background:#5a5a5a"></div>
<div class="t" style="left:0;width:25px;text-align:center;top:349px;font-size:12px;color:#e8e8e8">4</div>
<div class="a" style="left:0;top:363px;width:25px;height:1px;background:#5a5a5a"></div>
<div class="t" style="left:0;width:25px;text-align:center;top:398px;font-size:12px;color:#e8e8e8">5</div>
<div class="a" style="left:0;top:412px;width:25px;height:1px;background:#5a5a5a"></div>
<div class="t" style="left:0;width:25px;text-align:center;top:418px;font-size:12px;color:#e8e8e8">6</div>
<div class="a" style="left:0;top:432px;width:25px;height:1px;background:#5a5a5a"></div>
<div class="t" style="left:0;width:25px;text-align:center;top:438px;font-size:12px;color:#e8e8e8">7</div>
<div class="a" style="left:0;top:452px;width:25px;height:1px;background:#5a5a5a"></div>
<div class="t" style="left:0;width:25px;text-align:center;top:458px;font-size:12px;color:#e8e8e8">8</div>
<div class="a" style="left:0;top:472px;width:25px;height:1px;background:#5a5a5a"></div>
<div class="t" style="left:0;width:25px;text-align:center;top:478px;font-size:12px;color:#e8e8e8">9</div>
<div class="a" style="left:0;top:492px;width:25px;height:1px;background:#5a5a5a"></div>
<div class="t" style="left:0;width:25px;text-align:center;top:498px;font-size:12px;color:#e8e8e8">10</div>
<div class="a" style="left:0;top:512px;width:25px;height:1px;background:#5a5a5a"></div>
<div class="t" style="left:0;width:25px;text-align:center;top:518px;font-size:12px;color:#e8e8e8">11</div>
<div class="a" style="left:0;top:532px;width:25px;height:1px;background:#5a5a5a"></div>
<div class="t" style="left:0;width:25px;text-align:center;top:538px;font-size:12px;color:#e8e8e8">12</div>
<div class="a" style="left:0;top:552px;width:25px;height:1px;background:#5a5a5a"></div>
<div class="t" style="left:0;width:25px;text-align:center;top:558px;font-size:12px;color:#e8e8e8">13</div>
<div class="a" style="left:0;top:572px;width:25px;height:1px;background:#5a5a5a"></div>
<div class="t" style="left:0;width:25px;text-align:center;top:578px;font-size:12px;color:#e8e8e8">14</div>
<div class="a" style="left:0;top:592px;width:25px;height:1px;background:#5a5a5a"></div>
<div class="t" style="left:0;width:25px;text-align:center;top:598px;font-size:12px;color:#e8e8e8">15</div>
<div class="a" style="left:0;top:612px;width:25px;height:1px;background:#5a5a5a"></div>
<div class="t" style="left:0;width:25px;text-align:center;top:618px;font-size:12px;color:#e8e8e8">16</div>
<div class="a" style="left:0;top:632px;width:25px;height:1px;background:#5a5a5a"></div>
<div class="t" style="left:0;width:25px;text-align:center;top:638px;font-size:12px;color:#e8e8e8">17</div>
<div class="a" style="left:0;top:652px;width:25px;height:1px;background:#5a5a5a"></div>
<div class="t" style="left:0;width:25px;text-align:center;top:658px;font-size:12px;color:#e8e8e8">18</div>
<div class="a" style="left:0;top:672px;width:25px;height:1px;background:#5a5a5a"></div>
<div class="t" style="left:0;width:25px;text-align:center;top:678px;font-size:12px;color:#e8e8e8">19</div>
<div class="a" style="left:0;top:692px;width:25px;height:1px;background:#5a5a5a"></div>
<div class="t" style="left:0;width:25px;text-align:center;top:698px;font-size:12px;color:#e8e8e8">20</div>
<div class="a" style="left:0;top:712px;width:25px;height:1px;background:#5a5a5a"></div>
<div class="t" style="left:0;width:25px;text-align:center;top:718px;font-size:12px;color:#e8e8e8">21</div>
<div class="a" style="left:0;top:732px;width:25px;height:1px;background:#5a5a5a"></div>
<div class="t" style="left:0;width:25px;text-align:center;top:738px;font-size:12px;color:#e8e8e8">22</div>
<div class="a" style="left:0;top:752px;width:25px;height:1px;background:#5a5a5a"></div>
<div class="t" style="left:0;width:25px;text-align:center;top:758px;font-size:12px;color:#e8e8e8">23</div>
<div class="a" style="left:0;top:772px;width:25px;height:1px;background:#5a5a5a"></div>
<div class="t" style="left:0;width:25px;text-align:center;top:778px;font-size:12px;color:#e8e8e8">24</div>
<div class="a" style="left:0;top:792px;width:25px;height:1px;background:#5a5a5a"></div>
<div class="t" style="left:0;width:25px;text-align:center;top:798px;font-size:12px;color:#e8e8e8">25</div>
<div class="a" style="left:0;top:812px;width:25px;height:1px;background:#5a5a5a"></div>
<div class="t" style="left:0;width:25px;text-align:center;top:818px;font-size:12px;color:#e8e8e8">26</div>
<div class="a" style="left:0;top:832px;width:25px;height:1px;background:#5a5a5a"></div>
<div class="t" style="left:0;width:25px;text-align:center;top:838px;font-size:12px;color:#e8e8e8">27</div>
<div class="a" style="left:0;top:852px;width:25px;height:1px;background:#5a5a5a"></div>
<div class="t" style="left:0;width:25px;text-align:center;top:858px;font-size:12px;color:#e8e8e8">28</div>
<div class="a" style="left:0;top:872px;width:25px;height:1px;background:#5a5a5a"></div>
<div class="t" style="left:0;width:25px;text-align:center;top:878px;font-size:12px;color:#e8e8e8">29</div>
<div class="a" style="left:0;top:892px;width:25px;height:1px;background:#5a5a5a"></div>
<div class="t" style="left:0;width:25px;text-align:center;top:898px;font-size:12px;color:#e8e8e8">30</div>
<div class="a" style="left:0;top:912px;width:25px;height:1px;background:#5a5a5a"></div>
<div class="t" style="left:0;width:25px;text-align:center;top:918px;font-size:12px;color:#e8e8e8">31</div>
<div class="a" style="left:0;top:932px;width:25px;height:1px;background:#5a5a5a"></div>
<div class="t" style="left:0;width:25px;text-align:center;top:938px;font-size:12px;color:#e8e8e8">32</div>
<div class="a" style="left:0;top:952px;width:25px;height:1px;background:#5a5a5a"></div>
<div class="t" style="left:0;width:25px;text-align:center;top:958px;font-size:12px;color:#e8e8e8">33</div>
<div class="a" style="left:0;top:972px;width:25px;height:1px;background:#5a5a5a"></div>
<div class="t" style="left:0;width:25px;text-align:center;top:978px;font-size:12px;color:#e8e8e8">34</div>
<div class="a" style="left:0;top:992px;width:25px;height:1px;background:#5a5a5a"></div>
<div class="t" style="left:0;width:25px;text-align:center;top:998px;font-size:12px;color:#e8e8e8">35</div>
<div class="a" style="left:0;top:1012px;width:25px;height:1px;background:#5a5a5a"></div>
<div class="a" style="left:25px;top:272px;width:1px;height:747px;background:#6a6a6a"></div>
<div class="a" style="left:1662px;top:254px;width:15px;height:766px;background:#0b0b0b"></div>
<div class="a" style="left:1662px;top:254px;width:15px;height:15px;background:#333;border:1px solid #6a6a6a"></div>
<div class="a" style="left:1662px;top:269px;width:15px;height:98px;background:#333;border:1px solid #6a6a6a"></div>
<div class="a" style="left:1662px;top:1005px;width:15px;height:15px;background:#333;border:1px solid #6a6a6a"></div>
<div class="a" style="left:100px;top:1019px;width:58px;height:25px;background:#fff"></div>
<div class="a" style="left:100px;top:1042px;width:58px;height:2px;background:#1e7145"></div>
<div class="t" style="left:112px;top:1027px;font-size:12.5px;font-weight:bold;color:#1e7145">Sheet</div>
<div class="a" style="left:1026px;top:1026px;width:633px;height:15px;background:#0b0b0b"></div>
<div class="a" style="left:1026px;top:1026px;width:15px;height:15px;background:#333;border:1px solid #6a6a6a"></div>
<div class="a" style="left:1041px;top:1026px;width:562px;height:15px;background:#333;border:1px solid #6a6a6a"></div>
<div class="a" style="left:1644px;top:1026px;width:15px;height:15px;background:#333;border:1px solid #6a6a6a"></div>
<div class="a" style="left:0;top:1047px;width:1680px;height:1px;background:#3d3d3d"></div>
<div class="t" style="left:7px;top:1054px;font-size:11px;color:#f2f2f2">Ready</div>
<div class="t" style="left:76px;top:1054px;font-size:11px;color:#f2f2f2;letter-spacing:0.1px">Accessibility: Investigate</div>
<div class="t" style="left:1645px;top:1053px;font-size:11px;color:#f2f2f2">100%</div>
<div class="t" style="left:222px;top:222px;font-size:14px;color:#fff;font-family:Liberation Serif;font-style:italic">f<span style="font-size:12px">x</span></div>
<svg class="a" style="left:0;top:0" width="1680" height="1069" viewBox="0 0 1680 1069"><path fill-rule="evenodd" d="M22 59 H36 V73 H22 Z M24 61 H34 V64.5 L33 65.5 H25 L24 64.5 Z M25 68 H33 V72 H29 V70 H27 V72 H25 Z" fill="#4a4a4a"/><path d="M57 59.5 L52 63.5 L57 67.5" fill="none" stroke="#4a4a4a" stroke-width="2.2"/><path d="M52.5 63.5 H59.5 Q64.5 63.5 64.5 68 Q64.5 72 59.5 72" fill="none" stroke="#4a4a4a" stroke-width="1.8"/><path d="M73 64.5 L75 66.5 L77 64.5" fill="none" stroke="#4a4a4a"/><path d="M98 59.5 L103 63.5 L98 67.5" fill="none" stroke="#4a4a4a" stroke-width="2.2"/><path d="M102.5 63.5 H95.5 Q90.5 63.5 90.5 68 Q90.5 72 95.5 72" fill="none" stroke="#4a4a4a" stroke-width="1.8"/><path d="M112 64.5 L114 66.5 L116 64.5" fill="none" stroke="#4a4a4a"/><circle cx="130.5" cy="62" r="4" fill="none" stroke="#fff" stroke-width="1.6"/><path d="M129 61 V70 L127 68.5 Q125.5 68 126 69.5 L129 74 H136.5 L137.5 70 V67 Q137 65.5 134 65.5 L131.5 65 V61 Q130.5 59.5 129 61 Z" fill="#fff"/><path d="M147.5 64.5 L150 67 L152.5 64.5" fill="none" stroke="#fff" stroke-width="1.2"/><path d="M169 63.5 H176" stroke="#fff" stroke-width="1.2"/><path d="M169.5 65.5 L172.5 68.8 L175.5 65.5 Z" fill="#fff"/><path d="M1360 58 L1368.5 73 H1351.5 Z" fill="#f0a830"/><path d="M1360 63 V68.5 M1360 70 V71.5" stroke="#3a2a10" stroke-width="1.5"/><rect x="1460" y="54" width="3" height="3" fill="#4aa83a"/><rect x="1463" y="54" width="3" height="3" fill="#e8e6d0"/><rect x="1466" y="54" width="3" height="3" fill="#2a1a14"/><rect x="1469" y="54" width="3" height="3" fill="#2a1a14"/><rect x="1472" y="54" width="3" height="3" fill="#2a1a14"/><rect x="1475" y="54" width="3" height="3" fill="#e8e6d0"/><rect x="1478" y="54" width="3" height="3" fill="#8fd06a"/><rect x="1481" y="54" width="3" height="3" fill="#e8e6d0"/><rect x="1460" y="57" width="3" height="3" fill="#e8e6d0"/><rect x="1463" y="57" width="3" height="3" fill="#8fd06a"/><rect x="1466" y="57" width="3" height="3" fill="#2a1a14"/><rect x="1469" y="57" width="3" height="3" fill="#6a3a28"/><rect x="1472" y="57" width="3" height="3" fill="#2a1a14"/><rect x="1475" y="57" width="3" height="3" fill="#2a1a14"/><rect x="1478" y="57" width="3" height="3" fill="#8fd06a"/><rect x="1481" y="57" width="3" height="3" fill="#e8e6d0"/><rect x="1460" y="60" width="3" height="3" fill="#e8e6d0"/><rect x="1463" y="60" width="3" height="3" fill="#2a1a14"/><rect x="1466" y="60" width="3" height="3" fill="#2a1a14"/><rect x="1469" y="60" width="3" height="3" fill="#f0c8a8"/><rect x="1472" y="60" width="3" height="3" fill="#fae0c8"/><rect x="1475" y="60" width="3" height="3" fill="#2a1a14"/><rect x="1478" y="60" width="3" height="3" fill="#8fd06a"/><rect x="1481" y="60" width="3" height="3" fill="#4aa83a"/><rect x="1460" y="63" width="3" height="3" fill="#e8e6d0"/><rect x="1463" y="63" width="3" height="3" fill="#2a1a14"/><rect x="1466" y="63" width="3" height="3" fill="#6a3a28"/><rect x="1469" y="63" width="3" height="3" fill="#fae0c8"/><rect x="1472" y="63" width="3" height="3" fill="#f0c8a8"/><rect x="1475" y="63" width="3" height="3" fill="#fae0c8"/><rect x="1478" y="63" width="3" height="3" fill="#2a1a14"/><rect x="1481" y="63" width="3" height="3" fill="#8fd06a"/><rect x="1460" y="66" width="3" height="3" fill="#e8e6d0"/><rect x="1463" y="66" width="3" height="3" fill="#2a1a14"/><rect x="1466" y="66" width="3" height="3" fill="#6a3a28"/><rect x="1469" y="66" width="3" height="3" fill="#f0c8a8"/><rect x="1472" y="66" width="3" height="3" fill="#3a2018"/><rect x="1475" y="66" width="3" height="3" fill="#f0c8a8"/><rect x="1478" y="66" width="3" height="3" fill="#8fd06a"/><rect x="1481" y="66" width="3" height="3" fill="#4aa83a"/><rect x="1460" y="69" width="3" height="3" fill="#4aa83a"/><rect x="1463" y="69" width="3" height="3" fill="#2a1a14"/><rect x="1466" y="69" width="3" height="3" fill="#6a3a28"/><rect x="1469" y="69" width="3" height="3" fill="#fae0c8"/><rect x="1472" y="69" width="3" height="3" fill="#f0c8a8"/><rect x="1475" y="69" width="3" height="3" fill="#fae0c8"/><rect x="1478" y="69" width="3" height="3" fill="#2a1a14"/><rect x="1481" y="69" width="3" height="3" fill="#8fd06a"/><rect x="1460" y="72" width="3" height="3" fill="#4aa83a"/><rect x="1463" y="72" width="3" height="3" fill="#8fd06a"/><rect x="1466" y="72" width="3" height="3" fill="#2a1a14"/><rect x="1469" y="72" width="3" height="3" fill="#d87080"/><rect x="1472" y="72" width="3" height="3" fill="#f0c8a8"/><rect x="1475" y="72" width="3" height="3" fill="#fae0c8"/><rect x="1478" y="72" width="3" height="3" fill="#8fd06a"/><rect x="1481" y="72" width="3" height="3" fill="#4aa83a"/><rect x="1460" y="75" width="3" height="3" fill="#e8e6d0"/><rect x="1463" y="75" width="3" height="3" fill="#e8e6d0"/><rect x="1466" y="75" width="3" height="3" fill="#2a1a14"/><rect x="1469" y="75" width="3" height="3" fill="#f0c8a8"/><rect x="1472" y="75" width="3" height="3" fill="#fae0c8"/><rect x="1475" y="75" width="3" height="3" fill="#f0c8a8"/><rect x="1478" y="75" width="3" height="3" fill="#8fd06a"/><rect x="1481" y="75" width="3" height="3" fill="#4aa83a"/><rect x="1512.5" y="59.5" width="12" height="10" fill="none" stroke="#fff"/><path d="M1513 62.5 H1524 M1518.5 68 V64 M1516.5 66 L1518.5 64 L1520.5 66" stroke="#fff" fill="none"/><path d="M1559.5 63.5 H1570.5" stroke="#fff"/><rect x="1606.5" y="61.5" width="8" height="8" fill="none" stroke="#fff"/><path d="M1608.5 61.5 V59.5 H1616.5 V67.5 H1614.5" fill="none" stroke="#fff"/><path d="M1652 59 L1662 69 M1662 59 L1652 69" stroke="#fff" stroke-width="1.1"/><path d="M1649.5 90.5 H1665.5 V101.5 H1655 L1652 104.5 V101.5 H1649.5 Z" fill="none" stroke="#fff"/><circle cx="584.5" cy="95" r="5" fill="none" stroke="#fff" stroke-width="1.2"/><rect x="582" y="99.5" width="5" height="3.5" fill="#0b0b0b" stroke="#fff" stroke-width="1"/><path d="M583 105.5 H586" stroke="#fff" stroke-width="1.2"/><path d="M93 226 L96.5 229.5 L100 226 Z" fill="#fff"/><rect x="121" y="224" width="2" height="2" fill="#fff"/><rect x="121" y="228" width="2" height="2" fill="#fff"/><rect x="121" y="232" width="2" height="2" fill="#fff"/><path d="M151 224 L161 234 M161 224 L151 234" stroke="#777" stroke-width="1.3"/><path d="M186 230 L190 234 L199 224" stroke="#777" stroke-width="2" fill="none"/><path d="M1662 226 L1666 230 L1670 226" stroke="#fff" stroke-width="1.6" fill="none"/><path d="M33 1029 L29 1032.5 L33 1036 Z" fill="#777"/><path d="M56 1029 L60 1032.5 L56 1036 Z" fill="#777"/><circle cx="199" cy="1032.5" r="7" fill="none" stroke="#aaa" stroke-width="1.1"/><path d="M199 1028.5 V1036.5 M195 1032.5 H203" stroke="#aaa" stroke-width="1.5"/><rect x="1008" y="1028" width="2" height="2" fill="#fff"/><rect x="1008" y="1032" width="2" height="2" fill="#fff"/><rect x="1008" y="1036" width="2" height="2" fill="#fff"/><path d="M1034 1030 L1030 1033.5 L1034 1037 Z" fill="#fff"/><path d="M1650 1030 L1654 1033.5 L1650 1037 Z" fill="#fff"/><path d="M1666 265 L1669.5 261 L1673 265 Z" fill="#fff"/><path d="M1666 1010 L1669.5 1014 L1673 1010 Z" fill="#fff"/><path d="M61.5 1052.5 A6 6 0 0 0 62.5 1064" fill="none" stroke="#fff" stroke-width="1.3" stroke-dasharray="2.2 1.3"/><path d="M63.5 1051 V1057 H69.5 M67.5 1055 L69.5 1057 L67.5 1059" fill="none" stroke="#fff" stroke-width="1.2"/><path d="M64.5 1058.5 L72.5 1066 M72.5 1058.5 L64.5 1066" stroke="#fff" stroke-width="1.6"/><rect x="1380" y="1048" width="40" height="21" fill="#3e3e3e"/><path d="M1393.5 1051.5 H1406.5 V1064.5 H1393.5 Z M1393.5 1055.5 H1406.5 M1393.5 1060.5 H1406.5 M1397.5 1051.5 V1064.5 M1402.5 1051.5 V1064.5" fill="none" stroke="#fff"/><rect x="1433.5" y="1051.5" width="13" height="13" fill="none" stroke="#fff"/><rect x="1436.5" y="1054.5" width="7" height="7" fill="none" stroke="#fff"/><path d="M1438 1056.5 H1442 M1438 1058.5 H1442" stroke="#fff"/><rect x="1473.5" y="1051.5" width="13" height="13" fill="none" stroke="#fff"/><rect x="1475" y="1052" width="3" height="6" fill="#fff"/><rect x="1479" y="1052" width="3" height="6" fill="#fff"/><path d="M1474 1058.5 H1482.5 V1052" stroke="#fff" fill="none"/><path d="M1506 1058.5 H1514 M1519 1058.5 H1619 M1624 1058.5 H1633 M1628.5 1054 V1063" stroke="#fff" stroke-width="1"/><rect x="1567" y="1053" width="5" height="11" fill="#fff"/></svg>
</body></html>
